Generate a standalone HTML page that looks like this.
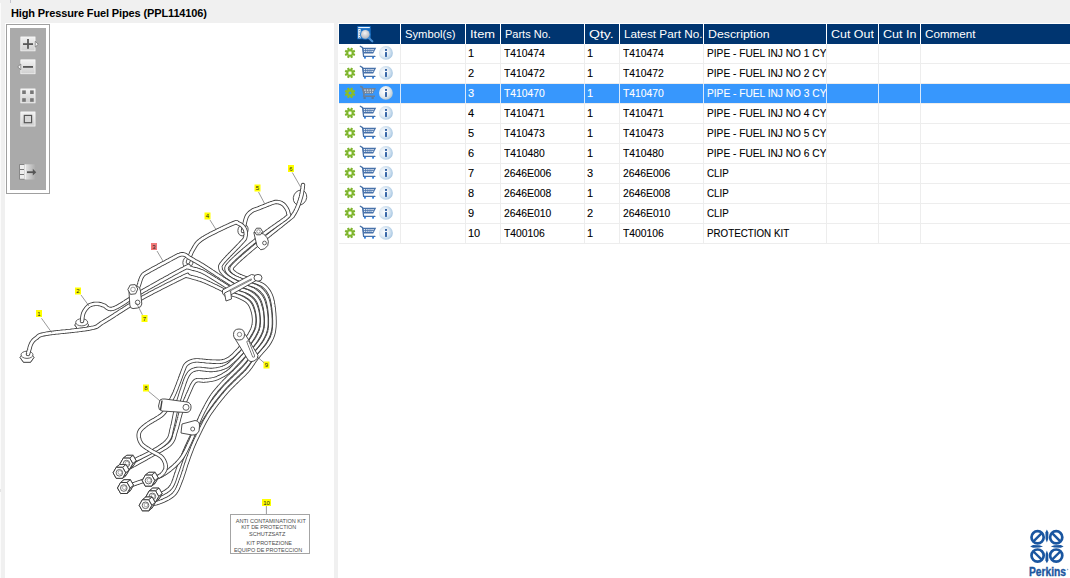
<!DOCTYPE html>
<html><head><meta charset="utf-8">
<style>
*{margin:0;padding:0;box-sizing:border-box}
html,body{width:1070px;height:578px;overflow:hidden;background:#f0f0f0;font-family:"Liberation Sans",sans-serif;font-size:11px;color:#000}
.a{position:absolute}
#title{left:11px;top:6px;font-weight:bold;font-size:11px;line-height:14px;letter-spacing:-0.13px;white-space:nowrap}
#lp{left:5px;top:23px;width:329px;height:555px;background:#fff}
#rp{left:338px;top:23px;width:732px;height:555px;background:#fff}
#tb{left:6px;top:24px;width:44px;height:170px;border:1px solid #a0a0a0;background:#fff}
#tbi{left:10px;top:28px;width:36px;height:162px;background:#aaaaaa}
.btn{position:absolute;left:20px;width:15px;height:15px;border-radius:2px;background:linear-gradient(#f8f8f8,#d4d4d4);box-shadow:0 1px 1px rgba(0,0,0,.35)}
#hdr{left:339px;top:24px;width:731px;height:20px;background:#003570}
.hs{position:absolute;top:0;width:1px;height:20px;background:#fff}
.ht{position:absolute;top:3px;color:#fff;line-height:14px;white-space:nowrap}
.vs{position:absolute;width:1px;background:#ededed}
.hl{position:absolute;left:339px;width:731px;height:1px;background:#ededed}
.sel{position:absolute;left:339px;width:731px;height:19px;background:#3797fd}
.c{position:absolute;line-height:14px;white-space:nowrap;overflow:hidden;-webkit-text-stroke:0.1px currentColor}
</style></head><body>
<svg width="0" height="0" style="position:absolute">
<defs>
<radialGradient id="ig" cx="0.4" cy="0.45" r="0.62"><stop offset="0" stop-color="#fbfdff"/><stop offset="0.5" stop-color="#e4edf5"/><stop offset="0.85" stop-color="#b8d2e8"/><stop offset="1" stop-color="#9dc0df"/></radialGradient>
<radialGradient id="igs" cx="0.4" cy="0.4" r="0.65"><stop offset="0" stop-color="#ffffff"/><stop offset="0.6" stop-color="#e2e9ee"/><stop offset="1" stop-color="#b3c5cf"/></radialGradient>
<radialGradient id="lens" cx="0.45" cy="0.35" r="0.65"><stop offset="0" stop-color="#f4f4f4"/><stop offset="1" stop-color="#b0b4bc"/></radialGradient>
<g id="gear"><path fill="#7db32c" d="M9.68,8.24 L11.31,8.88 L10.45,10.96 L8.85,10.26 L8.36,10.75 L9.06,12.35 L6.98,13.21 L6.34,11.58 L5.66,11.58 L5.02,13.21 L2.94,12.35 L3.64,10.75 L3.15,10.26 L1.55,10.96 L0.69,8.88 L2.32,8.24 L2.32,7.56 L0.69,6.92 L1.55,4.84 L3.15,5.54 L3.64,5.05 L2.94,3.45 L5.02,2.59 L5.66,4.22 L6.34,4.22 L6.98,2.59 L9.06,3.45 L8.36,5.05 L8.85,5.54 L10.45,4.84 L11.31,6.92 L9.68,7.56Z"/><circle cx="6" cy="7.9" r="2.2" fill="#a8d860"/><circle cx="6" cy="7.9" r="1.5" fill="#fff"/></g>
<g id="cart">
<path d="M16.3,1.3 L18.6,2.6 L19.6,11.4 L30.9,11.4" fill="none" stroke="#4670a8" stroke-width="1.3" stroke-linejoin="round" stroke-linecap="round"/>
<path d="M18.4,2.7 L32.2,2.7 L29.2,8.6 L19.3,8.6Z" fill="#4872aa"/>
<path d="M19.8,4.1h1.4v1.2h-1.4zM22.2,4.1h1.3v1.2h-1.3zM24.3,4.1h1.3v1.2h-1.3zM26.4,4.1h1.3v1.2h-1.3zM28.3,4.1h1.4v1.2h-1.4zM20.1,5.9h1.2v1.2h-1.2zM22.2,5.9h1.2v1.2h-1.2zM24.3,5.9h1.2v1.2h-1.2zM26.4,5.9h1.2v1.2h-1.2zM28.1,5.9h1.1v1.2h-1.1z" fill="#e8eef6"/>
<rect x="20" y="12" width="1.9" height="1.6" fill="#2f80e0"/><rect x="28.1" y="12" width="1.9" height="1.6" fill="#2f80e0"/>
</g>
<g id="info"><circle cx="41.9" cy="7.9" r="6.9" fill="url(#ig)"/><rect x="41" y="4" width="2" height="1.9" fill="#3a68a8"/><rect x="41" y="7.1" width="2" height="4.8" fill="#3a68a8"/></g>
<g id="ic"><use href="#gear"/><use href="#cart"/><use href="#info"/></g>
<g id="ics"><path fill="#8cbf22" d="M9.68,8.24 L11.31,8.88 L10.45,10.96 L8.85,10.26 L8.36,10.75 L9.06,12.35 L6.98,13.21 L6.34,11.58 L5.66,11.58 L5.02,13.21 L2.94,12.35 L3.64,10.75 L3.15,10.26 L1.55,10.96 L0.69,8.88 L2.32,8.24 L2.32,7.56 L0.69,6.92 L1.55,4.84 L3.15,5.54 L3.64,5.05 L2.94,3.45 L5.02,2.59 L5.66,4.22 L6.34,4.22 L6.98,2.59 L9.06,3.45 L8.36,5.05 L8.85,5.54 L10.45,4.84 L11.31,6.92 L9.68,7.56Z"/><circle cx="6" cy="7.9" r="1.5" fill="#3797fd"/>
<path d="M16.2,1.2 L18.3,2.2 L20,9.6 L19.6,11.3 L31,11.3" fill="none" stroke="#6d7f94" stroke-width="1.5" stroke-linejoin="round"/>
<path d="M18.2,3 L32,3 L28.8,8.8 L19.8,8.8Z" fill="#71839a"/>
<path d="M20.3,4.6h1.4v1.1h-1.4zM22.9,4.6h1.4v1.1h-1.4zM25.5,4.6h1.4v1.1h-1.4zM28.1,4.6h1.4v1.1h-1.4zM21,6.8h1.2v0.9h-1.2zM23.4,6.8h1.2v0.9h-1.2zM25.8,6.8h1.2v0.9h-1.2zM28.0,6.8h1.0v0.9h-1.0z" fill="#e4eaf0"/>
<rect x="19.5" y="12.2" width="2.2" height="1.6" fill="#5c7590"/><rect x="27.5" y="12.2" width="2.2" height="1.6" fill="#5c7590"/>
<circle cx="41.9" cy="7.9" r="6.9" fill="url(#igs)"/><rect x="41" y="4" width="2" height="1.9" fill="#3a68a8"/><rect x="41" y="7.1" width="2" height="4.8" fill="#3a68a8"/></g>
<g id="hicon">
<rect x="5.2" y="2.1" width="13.5" height="13.1" fill="#1b6fc2"/>
<rect x="6.2" y="3" width="11.6" height="1.1" fill="#eef5fc"/>
<rect x="6.2" y="4.9" width="2.4" height="9.4" fill="#f4f8fc"/>
<rect x="6.9" y="6.3" width="1" height="0.8" fill="#4a6a90"/><rect x="6.9" y="8.6" width="1" height="0.8" fill="#4a6a90"/><rect x="6.9" y="10.9" width="1" height="0.8" fill="#4a6a90"/><rect x="6.9" y="13" width="1" height="0.8" fill="#4a6a90"/>
<circle cx="13.3" cy="10.4" r="5.2" fill="#2a7fd0"/>
<circle cx="13.3" cy="10.4" r="4.3" fill="url(#lens)"/>
<path d="M16.8,14 L20.6,17.6" stroke="#4c90d4" stroke-width="2.2" stroke-linecap="round" stroke-dasharray="1.2 0.6"/>
</g>
</defs></svg>
<div class="a" style="left:10px;top:0;width:1px;height:3px;background:#c4c4cc"></div>
<div class="a" style="left:0;top:3px;width:1px;height:575px;background:#fbfbfb"></div>
<div class="a" style="left:0;top:489px;width:1px;height:3px;background:#e4e4e4"></div>
<div id="title" class="a">High Pressure Fuel Pipes (PPL114106)</div>
<div id="lp" class="a"></div>
<div id="rp" class="a"></div>

<!-- toolbar -->
<div id="tb" class="a"></div>
<div id="tbi" class="a"></div>
<svg class="a" style="left:10px;top:28px" width="36" height="162" viewBox="10 28 36 162">
<defs><linearGradient id="bg1" x1="0" y1="0" x2="0" y2="1"><stop offset="0" stop-color="#f2f2f2"/><stop offset="1" stop-color="#cfcfcf"/></linearGradient>
<linearGradient id="bg2" x1="0" y1="0" x2="1" y2="0"><stop offset="0" stop-color="#e8e8e8"/><stop offset="1" stop-color="#aaaaaa"/></linearGradient></defs>
<rect x="10" y="28" width="36" height="162" fill="#aaaaaa"/>
<!-- plus -->
<rect x="20.2" y="36.4" width="15.4" height="15" fill="#8a8a8a" opacity="0.7"/>
<rect x="20.8" y="36.9" width="14.3" height="14" fill="url(#bg1)" stroke="#fafafa" stroke-width="0.8"/><rect x="20.3" y="36.4" width="0" height="0"/>
<rect x="23" y="43.2" width="10" height="1.8" fill="#585858"/><rect x="27.1" y="39" width="1.8" height="9.8" fill="#585858"/>
<path d="M35.2,41.3 L38.3,44.2 L35.2,47.1Z" fill="#f2f2f2" stroke="#6e6e6e" stroke-width="0.7" stroke-linejoin="round"/>
<!-- minus -->
<rect x="20.2" y="59.3" width="15.4" height="15" fill="#8a8a8a" opacity="0.7"/>
<rect x="20.8" y="59.8" width="14.3" height="14" fill="url(#bg1)" stroke="#fafafa" stroke-width="0.8"/><rect x="20.3" y="36.4" width="0" height="0"/>
<rect x="23" y="66" width="10" height="1.8" fill="#585858"/>
<path d="M20.8,64 L17.7,66.9 L20.8,69.8Z" fill="#f2f2f2" stroke="#6e6e6e" stroke-width="0.7" stroke-linejoin="round"/>
<!-- grid -->
<rect x="20.2" y="88.4" width="15.4" height="15" fill="#8a8a8a" opacity="0.7"/>
<rect x="20.8" y="88.9" width="14.3" height="14" fill="url(#bg1)" stroke="#fafafa" stroke-width="0.8"/><rect x="20.3" y="36.4" width="0" height="0"/>
<rect x="22.2" y="90.4" width="3.6" height="3.6" fill="#777"/><rect x="30.1" y="90.4" width="3.6" height="3.6" fill="#777"/>
<rect x="22.2" y="98.2" width="3.6" height="3.6" fill="#777"/><rect x="30.1" y="98.2" width="3.6" height="3.6" fill="#777"/>
<!-- square -->
<rect x="20.2" y="111.4" width="15.4" height="15.2" fill="#8a8a8a" opacity="0.7"/>
<rect x="20.8" y="111.9" width="14.3" height="14.2" fill="url(#bg1)" stroke="#fafafa" stroke-width="0.8"/><rect x="20.3" y="36.4" width="0" height="0"/>
<rect x="24.3" y="115.4" width="7.3" height="7.3" fill="#d8d8d8" stroke="#555" stroke-width="1.2"/>
<!-- export -->
<rect x="19.3" y="164.2" width="5.4" height="15.3" fill="#7a7a7a"/>
<rect x="20" y="165" width="4" height="4" fill="#eee"/><rect x="20" y="170" width="4" height="4" fill="#eee"/><rect x="20" y="175" width="4" height="3.8" fill="#eee"/>
<rect x="24.6" y="164.3" width="11" height="15.2" fill="url(#bg2)"/>
<path d="M25,164.6 V179" stroke="#fff" stroke-width="1"/>
<rect x="27" y="171.3" width="6.5" height="1.8" fill="#555"/><path d="M32.8,168.8 L36.2,172.2 L32.8,175.6Z" fill="#555"/>
</svg>

<!-- DRAWING -->
<svg class="a" style="left:0;top:0" width="334" height="578" viewBox="0 0 334 578">
<path d="M34.0,357.5 L30.5,362.3 L23.5,362.3 L20.0,357.5 L23.5,352.7 L30.5,352.7Z" fill="#fff" stroke="#3c3c3c" stroke-width="0.9" stroke-linejoin="round"/>
<ellipse cx="27" cy="354.8" rx="6" ry="3.6" fill="#fff" stroke="#3c3c3c" stroke-width="0.8"/>
<path d="M20,357.5 L23.5,362.5 L30.5,362.5 L34,357.5" fill="none" stroke="#555" stroke-width="0.6"/>
<path d="M88.7,325.0 L85.2,329.8 L78.2,329.8 L74.7,325.0 L78.2,320.2 L85.2,320.2Z" fill="#fff" stroke="#3c3c3c" stroke-width="0.9" stroke-linejoin="round"/>
<ellipse cx="81.7" cy="322.3" rx="6" ry="3.6" fill="#fff" stroke="#3c3c3c" stroke-width="0.8"/>
<path d="M74.7,325.0 L78.2,330.0 L85.2,330.0 L88.7,325.0" fill="none" stroke="#555" stroke-width="0.6"/>
<ellipse cx="188" cy="262" rx="5" ry="6" transform="rotate(20 188 262)" fill="#fff" stroke="#3c3c3c" stroke-width="0.8"/>
<ellipse cx="243" cy="230" rx="5" ry="6" transform="rotate(20 243 230)" fill="#fff" stroke="#3c3c3c" stroke-width="0.8"/>
<ellipse cx="300" cy="197.6" rx="6.5" ry="7.7" transform="rotate(25 300 197.6)" fill="#fff" stroke="#3c3c3c" stroke-width="0.8"/>
<path d="M303.0,185.0 L302.9,185.6 L302.8,186.4 L302.7,187.3 L302.6,188.4 L302.4,189.5 L302.2,190.7 L302.0,192.0 L301.8,193.2 L301.6,194.4 L301.3,195.6 L301.1,196.5 L300.8,197.5 L300.5,198.4 L300.2,199.4 L299.9,200.5 L299.5,201.5 L299.2,202.5 L298.8,203.5 L298.5,204.5 L298.1,205.4 L297.8,206.4 L297.4,207.2 L297.1,208.0 L296.6,209.2 L296.0,210.3 L295.5,211.3 L295.0,212.2 L294.5,213.1 L294.0,213.9 L293.5,214.6 L293.0,215.3 L292.6,216.0 L292.7,216.1 L292.1,216.6 L289.9,218.4 L289.4,218.8 L288.9,219.2 L288.3,219.7 L287.7,220.2 L287.0,220.7 L286.3,221.3 L285.6,221.9 L284.8,222.5 L284.0,223.1 L283.2,223.8 L282.3,224.5 L281.5,225.2 L280.6,225.9 L279.7,226.6 L278.8,227.3 L277.8,228.1 L276.9,228.8 L276.0,229.5 L275.1,230.3 L274.2,231.0 L273.2,231.7 L272.3,232.4 L271.5,233.1 L270.6,233.8 L269.8,234.5 L269.0,235.1 L268.2,235.8 L267.4,236.4 L266.7,236.9 L266.0,237.5 L265.0,238.3 L264.1,239.0 L263.2,239.8 L262.3,240.5 L261.4,241.2 L260.6,241.9 L259.7,242.5 L258.9,243.2 L258.2,243.8 L257.4,244.4 L256.6,245.0 L255.9,245.6 L255.1,246.2 L254.4,246.8 L253.7,247.4 L252.9,248.0 L252.2,248.6 L251.5,249.2 L250.7,249.9 L250.0,250.5 L249.2,251.2 L248.3,251.9 L247.4,252.7 L246.6,253.4 L245.7,254.2 L244.8,254.9 L244.0,255.7 L243.1,256.4 L242.3,257.2 L241.5,257.9 L240.7,258.6 L239.9,259.3 L239.1,260.0 L238.4,260.7 L237.8,261.3 L237.1,261.9 L236.5,262.5 L236.0,263.0 L234.8,264.2 L233.8,265.2 L232.9,266.1 L232.3,266.8 L231.9,267.5 L231.6,268.3 L231.5,269.0 L231.7,269.9 L232.2,270.8 L232.9,271.6 L233.8,272.4 L234.9,273.2 L236.0,274.0 L236.8,274.5 L237.7,275.0 L238.7,275.4 L239.7,275.9 L240.8,276.3 L241.9,276.8 L243.0,277.2 L244.0,277.6 L245.0,278.0 L246.0,278.4 L247.0,278.8 L247.9,279.1 L248.9,279.4 L249.8,279.8 L250.8,280.1 L251.9,280.5 L253.0,281.0 L253.8,281.3 L254.7,281.7 L255.6,282.0 L256.6,282.3 L257.6,282.7 L258.6,283.1 L259.5,283.5 L260.5,283.9 L261.5,284.4 L262.4,284.9 L263.2,285.4 L264.0,286.0 L264.7,286.6 L265.4,287.3 L266.1,288.0 L266.8,288.7 L267.4,289.5 L268.0,290.3 L268.6,291.2 L269.1,292.0 L269.6,293.0 L270.1,293.9 L270.6,294.9 L271.0,296.0 L271.3,296.8 L271.6,297.7 L271.9,298.6 L272.1,299.5 L272.3,300.5 L272.5,301.5 L272.8,302.5 L272.9,303.5 L273.1,304.5 L273.3,305.6 L273.4,306.7 L273.6,307.7 L273.7,308.8 L273.8,309.9 L273.9,310.9 L274.0,312.0 L274.1,313.0 L274.2,313.9 L274.2,314.9 L274.3,316.0 L274.4,317.0 L274.4,318.0 L274.4,319.1 L274.5,320.1 L274.5,321.2 L274.5,322.2 L274.5,323.3 L274.5,324.3 L274.4,325.3 L274.4,326.3 L274.3,327.3 L274.2,328.2 L274.1,329.1 L274.0,330.0 L273.8,331.2 L273.6,332.3 L273.3,333.3 L273.1,334.3 L272.8,335.3 L272.4,336.2 L272.1,337.2 L271.7,338.1 L271.2,339.1 L270.7,340.0 L270.2,341.0 L269.6,342.0 L269.0,343.0 L268.5,343.8 L268.0,344.6 L267.4,345.4 L266.7,346.2 L266.1,347.0 L265.4,347.8 L264.7,348.6 L264.0,349.5 L263.2,350.3 L262.5,351.1 L261.8,351.9 L261.0,352.8 L260.3,353.6 L259.6,354.4 L258.9,355.2 L258.2,356.0 L257.6,356.7 L257.0,357.5 L256.3,358.4 L255.7,359.3 L255.0,360.2 L254.4,361.0 L253.8,361.9 L253.2,362.8 L252.7,363.6 L252.1,364.4 L251.5,365.3 L251.0,366.1 L250.4,366.9 L249.8,367.7 L249.2,368.5 L248.6,369.2 L248.0,370.0 L247.3,370.8 L246.6,371.6 L245.9,372.3 L245.2,373.0 L244.5,373.8 L243.8,374.5 L243.1,375.2 L242.3,375.8 L241.6,376.5 L240.9,377.2 L240.2,377.9 L239.4,378.6 L238.7,379.3 L238.0,380.0 L237.3,380.7 L236.6,381.4 L235.9,382.1 L235.1,382.8 L234.4,383.5 L233.7,384.2 L233.0,384.9 L232.3,385.6 L231.6,386.3 L230.9,387.0 L230.1,387.7 L229.4,388.5 L228.7,389.2 L228.0,390.0 L227.3,390.7 L226.7,391.5 L226.0,392.2 L225.3,393.0 L224.7,393.8 L224.0,394.6 L223.3,395.4 L222.7,396.2 L222.0,397.0 L221.3,397.8 L220.7,398.6 L220.0,399.4 L219.3,400.3 L218.7,401.1 L218.0,402.0 L217.4,402.8 L216.8,403.5 L216.2,404.3 L215.6,405.1 L215.0,405.9 L214.4,406.8 L213.8,407.6 L213.2,408.4 L212.6,409.2 L212.0,410.1 L211.4,410.9 L210.8,411.7 L210.2,412.6 L209.6,413.4 L209.1,414.3 L208.5,415.1 L208.0,416.0 L207.5,416.9 L207.0,417.7 L206.5,418.6 L206.0,419.5 L205.5,420.3 L205.0,421.2 L204.5,422.1 L204.0,423.0 L203.6,423.9 L203.1,424.8 L202.7,425.7 L202.2,426.6 L201.8,427.4 L201.3,428.3 L200.9,429.2 L200.4,430.1 L200.0,431.0 L199.5,431.9 L199.1,432.9 L198.6,433.8 L198.2,434.7 L197.7,435.7 L197.3,436.6 L196.8,437.5 L196.4,438.4 L195.9,439.4 L195.5,440.3 L195.1,441.2 L194.7,442.2 L194.2,443.1 L193.8,444.1 L193.4,445.0 L193.0,446.0 L192.6,446.9 L192.2,447.8 L191.9,448.7 L191.5,449.7 L191.2,450.6 L190.8,451.5 L190.5,452.4 L190.1,453.3 L189.8,454.3 L189.4,455.2 L189.1,456.2 L188.7,457.1 L188.4,458.1 L188.0,459.0 L187.7,460.0 L187.4,461.0 L187.0,462.0 L186.7,463.0 L186.3,463.9 L186.0,464.9 L185.7,465.9 L185.4,467.0 L185.0,468.0 L184.7,469.0 L184.4,470.1 L184.1,471.1 L183.7,472.2 L183.4,473.2 L183.1,474.2 L182.7,475.2 L182.4,476.2 L182.1,477.2 L181.7,478.2 L181.4,479.1 L181.0,480.0 L180.6,481.1 L180.2,482.1 L179.8,483.2 L179.4,484.2 L179.0,485.2 L178.6,486.2 L178.2,487.1 L177.8,488.1 L177.4,489.0 L176.9,489.9 L176.4,490.8 L175.9,491.6 L175.3,492.5 L174.7,493.2 L174.0,494.0 L173.3,494.7 L172.6,495.3 L171.8,495.9 L171.0,496.5 L170.2,497.1 L169.3,497.6 L168.4,498.2 L167.5,498.7 L166.5,499.1 L165.6,499.6 L164.6,500.0 L163.7,500.5 L162.8,500.9 L161.8,501.3 L160.9,501.6 L160.0,502.0 L158.9,502.4 L157.8,502.7 L156.7,503.1 L155.5,503.4 L154.3,503.7 L153.1,503.9 L151.9,504.1 L150.7,504.4 L149.6,504.6 L148.6,504.7 L147.7,504.9 L146.8,505.0 L146.1,505.2 L145.5,505.3" stroke="#3c3c3c" stroke-width="4.4" fill="none" stroke-linejoin="round" stroke-linecap="round"/>
<path d="M303.0,185.0 L302.9,185.6 L302.8,186.4 L302.7,187.3 L302.6,188.4 L302.4,189.5 L302.2,190.7 L302.0,192.0 L301.8,193.2 L301.6,194.4 L301.3,195.6 L301.1,196.5 L300.8,197.5 L300.5,198.4 L300.2,199.4 L299.9,200.5 L299.5,201.5 L299.2,202.5 L298.8,203.5 L298.5,204.5 L298.1,205.4 L297.8,206.4 L297.4,207.2 L297.1,208.0 L296.6,209.2 L296.0,210.3 L295.5,211.3 L295.0,212.2 L294.5,213.1 L294.0,213.9 L293.5,214.6 L293.0,215.3 L292.6,216.0 L292.7,216.1 L292.1,216.6 L289.9,218.4 L289.4,218.8 L288.9,219.2 L288.3,219.7 L287.7,220.2 L287.0,220.7 L286.3,221.3 L285.6,221.9 L284.8,222.5 L284.0,223.1 L283.2,223.8 L282.3,224.5 L281.5,225.2 L280.6,225.9 L279.7,226.6 L278.8,227.3 L277.8,228.1 L276.9,228.8 L276.0,229.5 L275.1,230.3 L274.2,231.0 L273.2,231.7 L272.3,232.4 L271.5,233.1 L270.6,233.8 L269.8,234.5 L269.0,235.1 L268.2,235.8 L267.4,236.4 L266.7,236.9 L266.0,237.5 L265.0,238.3 L264.1,239.0 L263.2,239.8 L262.3,240.5 L261.4,241.2 L260.6,241.9 L259.7,242.5 L258.9,243.2 L258.2,243.8 L257.4,244.4 L256.6,245.0 L255.9,245.6 L255.1,246.2 L254.4,246.8 L253.7,247.4 L252.9,248.0 L252.2,248.6 L251.5,249.2 L250.7,249.9 L250.0,250.5 L249.2,251.2 L248.3,251.9 L247.4,252.7 L246.6,253.4 L245.7,254.2 L244.8,254.9 L244.0,255.7 L243.1,256.4 L242.3,257.2 L241.5,257.9 L240.7,258.6 L239.9,259.3 L239.1,260.0 L238.4,260.7 L237.8,261.3 L237.1,261.9 L236.5,262.5 L236.0,263.0 L234.8,264.2 L233.8,265.2 L232.9,266.1 L232.3,266.8 L231.9,267.5 L231.6,268.3 L231.5,269.0 L231.7,269.9 L232.2,270.8 L232.9,271.6 L233.8,272.4 L234.9,273.2 L236.0,274.0 L236.8,274.5 L237.7,275.0 L238.7,275.4 L239.7,275.9 L240.8,276.3 L241.9,276.8 L243.0,277.2 L244.0,277.6 L245.0,278.0 L246.0,278.4 L247.0,278.8 L247.9,279.1 L248.9,279.4 L249.8,279.8 L250.8,280.1 L251.9,280.5 L253.0,281.0 L253.8,281.3 L254.7,281.7 L255.6,282.0 L256.6,282.3 L257.6,282.7 L258.6,283.1 L259.5,283.5 L260.5,283.9 L261.5,284.4 L262.4,284.9 L263.2,285.4 L264.0,286.0 L264.7,286.6 L265.4,287.3 L266.1,288.0 L266.8,288.7 L267.4,289.5 L268.0,290.3 L268.6,291.2 L269.1,292.0 L269.6,293.0 L270.1,293.9 L270.6,294.9 L271.0,296.0 L271.3,296.8 L271.6,297.7 L271.9,298.6 L272.1,299.5 L272.3,300.5 L272.5,301.5 L272.8,302.5 L272.9,303.5 L273.1,304.5 L273.3,305.6 L273.4,306.7 L273.6,307.7 L273.7,308.8 L273.8,309.9 L273.9,310.9 L274.0,312.0 L274.1,313.0 L274.2,313.9 L274.2,314.9 L274.3,316.0 L274.4,317.0 L274.4,318.0 L274.4,319.1 L274.5,320.1 L274.5,321.2 L274.5,322.2 L274.5,323.3 L274.5,324.3 L274.4,325.3 L274.4,326.3 L274.3,327.3 L274.2,328.2 L274.1,329.1 L274.0,330.0 L273.8,331.2 L273.6,332.3 L273.3,333.3 L273.1,334.3 L272.8,335.3 L272.4,336.2 L272.1,337.2 L271.7,338.1 L271.2,339.1 L270.7,340.0 L270.2,341.0 L269.6,342.0 L269.0,343.0 L268.5,343.8 L268.0,344.6 L267.4,345.4 L266.7,346.2 L266.1,347.0 L265.4,347.8 L264.7,348.6 L264.0,349.5 L263.2,350.3 L262.5,351.1 L261.8,351.9 L261.0,352.8 L260.3,353.6 L259.6,354.4 L258.9,355.2 L258.2,356.0 L257.6,356.7 L257.0,357.5 L256.3,358.4 L255.7,359.3 L255.0,360.2 L254.4,361.0 L253.8,361.9 L253.2,362.8 L252.7,363.6 L252.1,364.4 L251.5,365.3 L251.0,366.1 L250.4,366.9 L249.8,367.7 L249.2,368.5 L248.6,369.2 L248.0,370.0 L247.3,370.8 L246.6,371.6 L245.9,372.3 L245.2,373.0 L244.5,373.8 L243.8,374.5 L243.1,375.2 L242.3,375.8 L241.6,376.5 L240.9,377.2 L240.2,377.9 L239.4,378.6 L238.7,379.3 L238.0,380.0 L237.3,380.7 L236.6,381.4 L235.9,382.1 L235.1,382.8 L234.4,383.5 L233.7,384.2 L233.0,384.9 L232.3,385.6 L231.6,386.3 L230.9,387.0 L230.1,387.7 L229.4,388.5 L228.7,389.2 L228.0,390.0 L227.3,390.7 L226.7,391.5 L226.0,392.2 L225.3,393.0 L224.7,393.8 L224.0,394.6 L223.3,395.4 L222.7,396.2 L222.0,397.0 L221.3,397.8 L220.7,398.6 L220.0,399.4 L219.3,400.3 L218.7,401.1 L218.0,402.0 L217.4,402.8 L216.8,403.5 L216.2,404.3 L215.6,405.1 L215.0,405.9 L214.4,406.8 L213.8,407.6 L213.2,408.4 L212.6,409.2 L212.0,410.1 L211.4,410.9 L210.8,411.7 L210.2,412.6 L209.6,413.4 L209.1,414.3 L208.5,415.1 L208.0,416.0 L207.5,416.9 L207.0,417.7 L206.5,418.6 L206.0,419.5 L205.5,420.3 L205.0,421.2 L204.5,422.1 L204.0,423.0 L203.6,423.9 L203.1,424.8 L202.7,425.7 L202.2,426.6 L201.8,427.4 L201.3,428.3 L200.9,429.2 L200.4,430.1 L200.0,431.0 L199.5,431.9 L199.1,432.9 L198.6,433.8 L198.2,434.7 L197.7,435.7 L197.3,436.6 L196.8,437.5 L196.4,438.4 L195.9,439.4 L195.5,440.3 L195.1,441.2 L194.7,442.2 L194.2,443.1 L193.8,444.1 L193.4,445.0 L193.0,446.0 L192.6,446.9 L192.2,447.8 L191.9,448.7 L191.5,449.7 L191.2,450.6 L190.8,451.5 L190.5,452.4 L190.1,453.3 L189.8,454.3 L189.4,455.2 L189.1,456.2 L188.7,457.1 L188.4,458.1 L188.0,459.0 L187.7,460.0 L187.4,461.0 L187.0,462.0 L186.7,463.0 L186.3,463.9 L186.0,464.9 L185.7,465.9 L185.4,467.0 L185.0,468.0 L184.7,469.0 L184.4,470.1 L184.1,471.1 L183.7,472.2 L183.4,473.2 L183.1,474.2 L182.7,475.2 L182.4,476.2 L182.1,477.2 L181.7,478.2 L181.4,479.1 L181.0,480.0 L180.6,481.1 L180.2,482.1 L179.8,483.2 L179.4,484.2 L179.0,485.2 L178.6,486.2 L178.2,487.1 L177.8,488.1 L177.4,489.0 L176.9,489.9 L176.4,490.8 L175.9,491.6 L175.3,492.5 L174.7,493.2 L174.0,494.0 L173.3,494.7 L172.6,495.3 L171.8,495.9 L171.0,496.5 L170.2,497.1 L169.3,497.6 L168.4,498.2 L167.5,498.7 L166.5,499.1 L165.6,499.6 L164.6,500.0 L163.7,500.5 L162.8,500.9 L161.8,501.3 L160.9,501.6 L160.0,502.0 L158.9,502.4 L157.8,502.7 L156.7,503.1 L155.5,503.4 L154.3,503.7 L153.1,503.9 L151.9,504.1 L150.7,504.4 L149.6,504.6 L148.6,504.7 L147.7,504.9 L146.8,505.0 L146.1,505.2 L145.5,505.3" stroke="#fff" stroke-width="2.7" fill="none" stroke-linejoin="round" stroke-linecap="round"/>
<path d="M243.0,231.0 L243.1,230.4 L243.3,229.7 L243.5,228.8 L243.7,227.8 L243.9,226.7 L244.2,225.6 L244.4,224.4 L244.7,223.2 L245.0,222.0 L245.3,220.8 L245.6,219.7 L245.9,218.7 L246.2,217.8 L246.5,217.0 L247.1,215.8 L247.7,214.9 L248.4,214.0 L249.1,213.3 L249.8,212.6 L250.5,212.1 L251.3,211.5 L252.0,211.0 L252.9,210.4 L253.7,210.0 L254.5,209.7 L255.4,209.4 L256.5,209.0 L258.0,208.5 L258.7,208.2 L259.5,207.9 L260.4,207.5 L261.4,207.1 L262.4,206.7 L263.5,206.3 L264.5,205.9 L265.6,205.4 L266.7,205.0 L267.7,204.6 L268.7,204.2 L269.6,203.9 L270.5,203.5 L271.3,203.2 L272.0,203.0 L273.6,202.5 L274.6,202.2 L275.4,202.0 L276.1,202.0 L277.0,202.0 L278.0,202.1 L279.0,202.3 L280.1,202.6 L281.1,203.0 L282.0,203.5 L282.9,204.1 L283.8,204.8 L284.6,205.7 L285.3,206.6 L286.0,207.5 L286.5,208.4 L287.0,209.3 L287.5,210.3 L287.9,211.3 L288.2,212.3 L288.3,213.2 L288.6,214.1 L289.0,214.7 L288.6,215.6 L286.8,217.4 L286.3,217.8 L285.8,218.2 L285.2,218.7 L284.6,219.2 L283.9,219.7 L283.2,220.2 L282.4,220.7 L281.6,221.3 L280.8,221.9 L279.9,222.5 L279.0,223.1 L278.1,223.7 L277.2,224.4 L276.3,225.0 L275.3,225.7 L274.4,226.4 L273.4,227.0 L272.5,227.7 L271.5,228.4 L270.5,229.1 L269.6,229.7 L268.7,230.4 L267.8,231.1 L266.9,231.7 L266.0,232.4 L265.2,233.0 L264.4,233.6 L263.7,234.2 L262.9,234.8 L262.0,235.4 L261.2,236.1 L260.4,236.7 L259.6,237.4 L258.7,238.0 L257.9,238.7 L257.1,239.3 L256.2,240.0 L255.4,240.7 L254.6,241.3 L253.8,242.0 L252.9,242.6 L252.1,243.3 L251.3,243.9 L250.5,244.6 L249.7,245.2 L249.0,245.9 L248.2,246.5 L247.5,247.1 L246.7,247.7 L246.0,248.3 L245.3,248.9 L244.7,249.4 L244.0,250.0 L243.1,250.8 L242.1,251.6 L241.2,252.4 L240.3,253.2 L239.5,253.9 L238.6,254.7 L237.8,255.4 L237.0,256.2 L236.2,256.9 L235.5,257.6 L234.7,258.3 L234.0,258.9 L233.4,259.6 L232.7,260.2 L232.1,260.8 L231.5,261.4 L231.0,261.9 L230.5,262.5 L230.0,263.0 L228.7,264.4 L227.8,265.5 L227.1,266.4 L226.7,267.3 L226.5,268.1 L226.5,269.0 L226.7,269.9 L227.1,270.8 L227.6,271.7 L228.3,272.5 L229.2,273.4 L230.1,274.2 L231.0,275.0 L231.7,275.5 L232.5,276.0 L233.4,276.5 L234.3,276.9 L235.3,277.4 L236.2,277.8 L237.2,278.2 L238.2,278.7 L239.1,279.1 L240.0,279.5 L240.9,280.0 L241.8,280.4 L242.7,280.8 L243.5,281.2 L244.4,281.6 L245.3,282.1 L246.2,282.5 L247.2,282.9 L248.2,283.4 L249.0,283.8 L249.9,284.1 L250.8,284.4 L251.8,284.8 L252.8,285.1 L253.7,285.5 L254.7,285.8 L255.7,286.2 L256.6,286.7 L257.5,287.1 L258.4,287.6 L259.2,288.2 L260.0,288.8 L260.8,289.5 L261.6,290.2 L262.3,291.0 L263.0,291.8 L263.7,292.6 L264.4,293.4 L265.0,294.4 L265.6,295.3 L266.1,296.3 L266.6,297.4 L266.9,298.2 L267.3,299.1 L267.6,300.0 L267.9,300.9 L268.1,301.9 L268.4,302.9 L268.6,303.9 L268.8,304.9 L269.0,306.0 L269.2,307.1 L269.4,308.1 L269.5,309.2 L269.7,310.3 L269.8,311.3 L269.9,312.4 L270.0,313.4 L270.1,314.4 L270.2,315.5 L270.2,316.6 L270.3,317.7 L270.4,318.8 L270.4,319.9 L270.4,321.0 L270.4,322.1 L270.4,323.1 L270.4,324.2 L270.3,325.3 L270.3,326.3 L270.2,327.3 L270.0,328.3 L269.9,329.2 L269.7,330.3 L269.5,331.3 L269.2,332.4 L268.9,333.3 L268.6,334.3 L268.3,335.2 L267.9,336.1 L267.5,337.0 L267.0,337.9 L266.6,338.8 L266.0,339.8 L265.5,340.7 L264.9,341.7 L264.4,342.5 L263.9,343.3 L263.3,344.1 L262.7,344.9 L262.0,345.7 L261.4,346.5 L260.7,347.3 L260.0,348.1 L259.3,349.0 L258.6,349.8 L257.9,350.6 L257.2,351.4 L256.5,352.2 L255.8,353.0 L255.1,353.8 L254.5,354.5 L253.9,355.3 L253.2,356.2 L252.5,357.1 L251.9,358.0 L251.2,358.8 L250.6,359.7 L250.0,360.5 L249.4,361.4 L248.8,362.2 L248.2,363.0 L247.6,363.8 L246.9,364.6 L246.3,365.4 L245.7,366.2 L245.0,367.0 L244.3,367.8 L243.6,368.5 L242.9,369.3 L242.2,370.0 L241.5,370.7 L240.8,371.4 L240.1,372.1 L239.3,372.8 L238.6,373.5 L237.9,374.2 L237.2,374.9 L236.4,375.6 L235.7,376.3 L235.0,377.0 L234.3,377.7 L233.6,378.4 L232.9,379.1 L232.1,379.8 L231.4,380.5 L230.7,381.2 L230.0,381.9 L229.3,382.6 L228.6,383.3 L227.9,384.0 L227.1,384.7 L226.4,385.5 L225.7,386.2 L225.0,387.0 L224.3,387.7 L223.7,388.5 L223.0,389.2 L222.3,390.0 L221.7,390.8 L221.0,391.6 L220.3,392.4 L219.7,393.2 L219.0,394.0 L218.3,394.8 L217.7,395.6 L217.0,396.4 L216.3,397.3 L215.7,398.1 L215.0,399.0 L214.4,399.8 L213.8,400.5 L213.2,401.3 L212.6,402.1 L212.0,402.9 L211.4,403.8 L210.8,404.6 L210.2,405.4 L209.6,406.2 L209.0,407.1 L208.5,407.9 L207.9,408.7 L207.3,409.6 L206.7,410.4 L206.1,411.3 L205.6,412.1 L205.0,413.0 L204.4,413.9 L203.9,414.7 L203.3,415.6 L202.8,416.5 L202.2,417.4 L201.7,418.3 L201.1,419.2 L200.6,420.1 L200.0,420.9 L199.5,421.8 L199.0,422.7 L198.5,423.6 L198.0,424.5 L197.5,425.4 L197.0,426.3 L196.5,427.1 L196.0,428.0 L195.5,429.0 L195.0,429.9 L194.5,430.8 L194.0,431.8 L193.5,432.7 L193.1,433.6 L192.6,434.5 L192.2,435.4 L191.7,436.3 L191.3,437.2 L190.8,438.1 L190.4,439.1 L189.9,440.0 L189.5,441.0 L189.0,442.0 L188.6,442.9 L188.2,443.8 L187.7,444.7 L187.3,445.7 L186.9,446.6 L186.4,447.6 L186.0,448.5 L185.6,449.5 L185.2,450.5 L184.7,451.5 L184.3,452.4 L183.9,453.4 L183.5,454.3 L183.1,455.3 L182.7,456.2 L182.4,457.1 L182.0,458.0 L181.6,459.1 L181.2,460.1 L180.8,461.1 L180.5,462.1 L180.1,463.1 L179.8,464.1 L179.4,465.1 L179.1,466.0 L178.8,467.0 L178.4,468.0 L178.1,469.0 L177.7,470.0 L177.4,471.0 L177.0,472.0 L176.7,472.9 L176.3,473.9 L176.0,474.9 L175.7,475.9 L175.4,476.9 L175.0,477.9 L174.7,478.9 L174.4,479.9 L174.0,480.9 L173.6,481.9 L173.3,482.8 L172.9,483.7 L172.4,484.6 L172.0,485.5 L171.5,486.3 L171.0,487.0 L170.3,487.8 L169.6,488.6 L168.8,489.4 L167.9,490.1 L167.1,490.7 L166.2,491.3 L165.3,491.9 L164.4,492.4 L163.5,492.9 L162.6,493.4 L161.7,493.8 L160.9,494.2 L160.2,494.6 L159.0,495.1 L157.9,495.5 L156.7,495.8 L155.6,496.0 L154.6,496.1 L153.7,496.2 L153.0,496.3 L152.4,496.4" stroke="#3c3c3c" stroke-width="4.4" fill="none" stroke-linejoin="round" stroke-linecap="round"/>
<path d="M243.0,231.0 L243.1,230.4 L243.3,229.7 L243.5,228.8 L243.7,227.8 L243.9,226.7 L244.2,225.6 L244.4,224.4 L244.7,223.2 L245.0,222.0 L245.3,220.8 L245.6,219.7 L245.9,218.7 L246.2,217.8 L246.5,217.0 L247.1,215.8 L247.7,214.9 L248.4,214.0 L249.1,213.3 L249.8,212.6 L250.5,212.1 L251.3,211.5 L252.0,211.0 L252.9,210.4 L253.7,210.0 L254.5,209.7 L255.4,209.4 L256.5,209.0 L258.0,208.5 L258.7,208.2 L259.5,207.9 L260.4,207.5 L261.4,207.1 L262.4,206.7 L263.5,206.3 L264.5,205.9 L265.6,205.4 L266.7,205.0 L267.7,204.6 L268.7,204.2 L269.6,203.9 L270.5,203.5 L271.3,203.2 L272.0,203.0 L273.6,202.5 L274.6,202.2 L275.4,202.0 L276.1,202.0 L277.0,202.0 L278.0,202.1 L279.0,202.3 L280.1,202.6 L281.1,203.0 L282.0,203.5 L282.9,204.1 L283.8,204.8 L284.6,205.7 L285.3,206.6 L286.0,207.5 L286.5,208.4 L287.0,209.3 L287.5,210.3 L287.9,211.3 L288.2,212.3 L288.3,213.2 L288.6,214.1 L289.0,214.7 L288.6,215.6 L286.8,217.4 L286.3,217.8 L285.8,218.2 L285.2,218.7 L284.6,219.2 L283.9,219.7 L283.2,220.2 L282.4,220.7 L281.6,221.3 L280.8,221.9 L279.9,222.5 L279.0,223.1 L278.1,223.7 L277.2,224.4 L276.3,225.0 L275.3,225.7 L274.4,226.4 L273.4,227.0 L272.5,227.7 L271.5,228.4 L270.5,229.1 L269.6,229.7 L268.7,230.4 L267.8,231.1 L266.9,231.7 L266.0,232.4 L265.2,233.0 L264.4,233.6 L263.7,234.2 L262.9,234.8 L262.0,235.4 L261.2,236.1 L260.4,236.7 L259.6,237.4 L258.7,238.0 L257.9,238.7 L257.1,239.3 L256.2,240.0 L255.4,240.7 L254.6,241.3 L253.8,242.0 L252.9,242.6 L252.1,243.3 L251.3,243.9 L250.5,244.6 L249.7,245.2 L249.0,245.9 L248.2,246.5 L247.5,247.1 L246.7,247.7 L246.0,248.3 L245.3,248.9 L244.7,249.4 L244.0,250.0 L243.1,250.8 L242.1,251.6 L241.2,252.4 L240.3,253.2 L239.5,253.9 L238.6,254.7 L237.8,255.4 L237.0,256.2 L236.2,256.9 L235.5,257.6 L234.7,258.3 L234.0,258.9 L233.4,259.6 L232.7,260.2 L232.1,260.8 L231.5,261.4 L231.0,261.9 L230.5,262.5 L230.0,263.0 L228.7,264.4 L227.8,265.5 L227.1,266.4 L226.7,267.3 L226.5,268.1 L226.5,269.0 L226.7,269.9 L227.1,270.8 L227.6,271.7 L228.3,272.5 L229.2,273.4 L230.1,274.2 L231.0,275.0 L231.7,275.5 L232.5,276.0 L233.4,276.5 L234.3,276.9 L235.3,277.4 L236.2,277.8 L237.2,278.2 L238.2,278.7 L239.1,279.1 L240.0,279.5 L240.9,280.0 L241.8,280.4 L242.7,280.8 L243.5,281.2 L244.4,281.6 L245.3,282.1 L246.2,282.5 L247.2,282.9 L248.2,283.4 L249.0,283.8 L249.9,284.1 L250.8,284.4 L251.8,284.8 L252.8,285.1 L253.7,285.5 L254.7,285.8 L255.7,286.2 L256.6,286.7 L257.5,287.1 L258.4,287.6 L259.2,288.2 L260.0,288.8 L260.8,289.5 L261.6,290.2 L262.3,291.0 L263.0,291.8 L263.7,292.6 L264.4,293.4 L265.0,294.4 L265.6,295.3 L266.1,296.3 L266.6,297.4 L266.9,298.2 L267.3,299.1 L267.6,300.0 L267.9,300.9 L268.1,301.9 L268.4,302.9 L268.6,303.9 L268.8,304.9 L269.0,306.0 L269.2,307.1 L269.4,308.1 L269.5,309.2 L269.7,310.3 L269.8,311.3 L269.9,312.4 L270.0,313.4 L270.1,314.4 L270.2,315.5 L270.2,316.6 L270.3,317.7 L270.4,318.8 L270.4,319.9 L270.4,321.0 L270.4,322.1 L270.4,323.1 L270.4,324.2 L270.3,325.3 L270.3,326.3 L270.2,327.3 L270.0,328.3 L269.9,329.2 L269.7,330.3 L269.5,331.3 L269.2,332.4 L268.9,333.3 L268.6,334.3 L268.3,335.2 L267.9,336.1 L267.5,337.0 L267.0,337.9 L266.6,338.8 L266.0,339.8 L265.5,340.7 L264.9,341.7 L264.4,342.5 L263.9,343.3 L263.3,344.1 L262.7,344.9 L262.0,345.7 L261.4,346.5 L260.7,347.3 L260.0,348.1 L259.3,349.0 L258.6,349.8 L257.9,350.6 L257.2,351.4 L256.5,352.2 L255.8,353.0 L255.1,353.8 L254.5,354.5 L253.9,355.3 L253.2,356.2 L252.5,357.1 L251.9,358.0 L251.2,358.8 L250.6,359.7 L250.0,360.5 L249.4,361.4 L248.8,362.2 L248.2,363.0 L247.6,363.8 L246.9,364.6 L246.3,365.4 L245.7,366.2 L245.0,367.0 L244.3,367.8 L243.6,368.5 L242.9,369.3 L242.2,370.0 L241.5,370.7 L240.8,371.4 L240.1,372.1 L239.3,372.8 L238.6,373.5 L237.9,374.2 L237.2,374.9 L236.4,375.6 L235.7,376.3 L235.0,377.0 L234.3,377.7 L233.6,378.4 L232.9,379.1 L232.1,379.8 L231.4,380.5 L230.7,381.2 L230.0,381.9 L229.3,382.6 L228.6,383.3 L227.9,384.0 L227.1,384.7 L226.4,385.5 L225.7,386.2 L225.0,387.0 L224.3,387.7 L223.7,388.5 L223.0,389.2 L222.3,390.0 L221.7,390.8 L221.0,391.6 L220.3,392.4 L219.7,393.2 L219.0,394.0 L218.3,394.8 L217.7,395.6 L217.0,396.4 L216.3,397.3 L215.7,398.1 L215.0,399.0 L214.4,399.8 L213.8,400.5 L213.2,401.3 L212.6,402.1 L212.0,402.9 L211.4,403.8 L210.8,404.6 L210.2,405.4 L209.6,406.2 L209.0,407.1 L208.5,407.9 L207.9,408.7 L207.3,409.6 L206.7,410.4 L206.1,411.3 L205.6,412.1 L205.0,413.0 L204.4,413.9 L203.9,414.7 L203.3,415.6 L202.8,416.5 L202.2,417.4 L201.7,418.3 L201.1,419.2 L200.6,420.1 L200.0,420.9 L199.5,421.8 L199.0,422.7 L198.5,423.6 L198.0,424.5 L197.5,425.4 L197.0,426.3 L196.5,427.1 L196.0,428.0 L195.5,429.0 L195.0,429.9 L194.5,430.8 L194.0,431.8 L193.5,432.7 L193.1,433.6 L192.6,434.5 L192.2,435.4 L191.7,436.3 L191.3,437.2 L190.8,438.1 L190.4,439.1 L189.9,440.0 L189.5,441.0 L189.0,442.0 L188.6,442.9 L188.2,443.8 L187.7,444.7 L187.3,445.7 L186.9,446.6 L186.4,447.6 L186.0,448.5 L185.6,449.5 L185.2,450.5 L184.7,451.5 L184.3,452.4 L183.9,453.4 L183.5,454.3 L183.1,455.3 L182.7,456.2 L182.4,457.1 L182.0,458.0 L181.6,459.1 L181.2,460.1 L180.8,461.1 L180.5,462.1 L180.1,463.1 L179.8,464.1 L179.4,465.1 L179.1,466.0 L178.8,467.0 L178.4,468.0 L178.1,469.0 L177.7,470.0 L177.4,471.0 L177.0,472.0 L176.7,472.9 L176.3,473.9 L176.0,474.9 L175.7,475.9 L175.4,476.9 L175.0,477.9 L174.7,478.9 L174.4,479.9 L174.0,480.9 L173.6,481.9 L173.3,482.8 L172.9,483.7 L172.4,484.6 L172.0,485.5 L171.5,486.3 L171.0,487.0 L170.3,487.8 L169.6,488.6 L168.8,489.4 L167.9,490.1 L167.1,490.7 L166.2,491.3 L165.3,491.9 L164.4,492.4 L163.5,492.9 L162.6,493.4 L161.7,493.8 L160.9,494.2 L160.2,494.6 L159.0,495.1 L157.9,495.5 L156.7,495.8 L155.6,496.0 L154.6,496.1 L153.7,496.2 L153.0,496.3 L152.4,496.4" stroke="#fff" stroke-width="2.7" fill="none" stroke-linejoin="round" stroke-linecap="round"/>
<path d="M188.0,262.0 L188.2,261.5 L188.4,260.8 L188.7,260.0 L189.0,259.1 L189.3,258.1 L189.7,257.1 L190.0,256.0 L190.4,254.9 L190.9,253.8 L191.3,252.7 L191.8,251.6 L192.4,250.6 L192.9,249.7 L193.4,248.9 L193.9,248.1 L194.3,247.3 L194.7,246.6 L195.2,245.8 L195.6,245.1 L196.2,244.3 L196.7,243.6 L197.4,242.8 L198.2,242.0 L199.1,241.2 L200.1,240.4 L201.3,239.5 L202.6,238.6 L203.2,238.2 L203.9,237.8 L204.7,237.3 L205.5,236.9 L206.3,236.4 L207.2,235.9 L208.1,235.4 L209.1,234.9 L210.1,234.3 L211.1,233.8 L212.2,233.3 L213.2,232.8 L214.3,232.2 L215.4,231.7 L216.5,231.1 L217.6,230.6 L218.7,230.1 L219.8,229.5 L220.9,229.0 L221.9,228.5 L223.0,228.0 L224.0,227.5 L225.0,227.0 L226.0,226.6 L227.0,226.1 L227.9,225.7 L228.8,225.3 L229.6,224.9 L230.4,224.6 L231.1,224.2 L231.8,223.9 L232.4,223.7 L233.0,223.4 L235.9,222.2 L236.8,222.1 L236.9,222.5 L237.5,223.0 L238.5,223.4 L239.6,223.9 L240.6,224.5 L241.6,225.2 L242.5,226.0 L243.3,226.9 L244.0,227.8 L244.6,228.8 L245.1,229.9 L245.5,231.0 L245.7,232.0 L245.8,233.0 L245.8,234.0 L245.7,235.0 L245.5,236.0 L245.3,237.0 L245.1,237.8 L245.0,238.4 L244.6,239.0 L243.7,240.1 L242.0,242.0 L241.6,242.5 L241.0,243.0 L240.5,243.6 L239.9,244.3 L239.2,245.0 L238.5,245.7 L237.8,246.5 L237.0,247.2 L236.2,248.1 L235.4,248.9 L234.6,249.7 L233.7,250.6 L232.9,251.5 L232.0,252.3 L231.2,253.2 L230.3,254.1 L229.5,254.9 L228.7,255.8 L227.9,256.6 L227.1,257.4 L226.4,258.2 L225.7,258.9 L225.1,259.6 L224.5,260.3 L223.9,260.9 L223.4,261.5 L223.0,262.0 L221.5,263.9 L220.7,265.2 L220.3,266.1 L220.2,266.8 L220.3,267.6 L220.5,268.5 L220.7,269.4 L221.1,270.4 L221.7,271.3 L222.4,272.2 L223.2,273.2 L224.1,274.1 L225.0,275.0 L225.7,275.6 L226.5,276.3 L227.4,276.9 L228.3,277.5 L229.2,278.1 L230.2,278.7 L231.1,279.3 L232.1,279.9 L233.1,280.5 L234.0,281.0 L234.9,281.5 L235.8,282.0 L236.7,282.5 L237.7,283.0 L238.6,283.5 L239.5,284.0 L240.4,284.4 L241.4,284.9 L242.4,285.3 L243.4,285.8 L244.4,286.2 L245.3,286.6 L246.4,287.0 L247.4,287.3 L248.5,287.7 L249.5,288.1 L250.6,288.5 L251.6,288.9 L252.6,289.3 L253.5,289.8 L254.4,290.4 L255.2,291.0 L256.1,291.6 L256.9,292.3 L257.6,292.9 L258.4,293.6 L259.1,294.4 L259.8,295.2 L260.5,296.0 L261.1,296.9 L261.7,297.8 L262.2,298.8 L262.6,299.6 L263.0,300.5 L263.3,301.4 L263.6,302.3 L263.9,303.3 L264.2,304.3 L264.5,305.4 L264.7,306.4 L265.0,307.5 L265.2,308.5 L265.3,309.6 L265.5,310.7 L265.7,311.7 L265.8,312.8 L265.9,313.8 L266.0,314.8 L266.1,315.9 L266.2,316.9 L266.3,318.0 L266.3,319.1 L266.3,320.2 L266.3,321.3 L266.3,322.3 L266.3,323.4 L266.3,324.5 L266.2,325.5 L266.1,326.5 L266.0,327.5 L265.8,328.4 L265.6,329.4 L265.4,330.4 L265.1,331.4 L264.8,332.3 L264.5,333.2 L264.1,334.1 L263.7,335.0 L263.3,335.9 L262.9,336.8 L262.4,337.7 L261.9,338.6 L261.4,339.5 L260.8,340.4 L260.3,341.2 L259.8,342.0 L259.2,342.8 L258.6,343.6 L258.0,344.4 L257.4,345.2 L256.7,346.0 L256.0,346.8 L255.4,347.6 L254.7,348.4 L254.0,349.2 L253.3,350.0 L252.7,350.8 L252.0,351.6 L251.4,352.4 L250.8,353.1 L250.1,353.9 L249.5,354.8 L248.9,355.6 L248.2,356.4 L247.6,357.2 L247.0,357.9 L246.4,358.7 L245.8,359.5 L245.2,360.2 L244.6,361.0 L243.9,361.8 L243.3,362.5 L242.7,363.3 L242.0,364.0 L241.3,364.7 L240.6,365.5 L239.9,366.2 L239.2,366.9 L238.5,367.6 L237.8,368.3 L237.1,369.1 L236.3,369.8 L235.6,370.5 L234.9,371.2 L234.2,371.9 L233.4,372.6 L232.7,373.3 L232.0,374.0 L231.3,374.7 L230.6,375.4 L229.9,376.1 L229.1,376.8 L228.4,377.5 L227.7,378.2 L227.0,378.9 L226.3,379.6 L225.6,380.3 L224.9,381.0 L224.1,381.7 L223.4,382.5 L222.7,383.2 L222.0,384.0 L221.3,384.7 L220.7,385.5 L220.0,386.2 L219.3,387.0 L218.6,387.8 L217.9,388.6 L217.2,389.4 L216.5,390.2 L215.9,391.0 L215.2,391.8 L214.5,392.6 L213.9,393.4 L213.2,394.3 L212.6,395.1 L212.0,396.0 L211.4,396.8 L210.9,397.6 L210.4,398.5 L209.8,399.3 L209.3,400.2 L208.8,401.1 L208.3,401.9 L207.8,402.8 L207.3,403.7 L206.8,404.6 L206.4,405.5 L205.9,406.4 L205.4,407.3 L204.9,408.2 L204.5,409.1 L204.0,410.0 L203.5,410.9 L203.1,411.8 L202.6,412.7 L202.2,413.6 L201.7,414.5 L201.3,415.5 L200.9,416.4 L200.4,417.3 L200.0,418.2 L199.6,419.2 L199.2,420.1 L198.7,421.1 L198.3,422.0 L197.9,423.0 L197.4,424.0 L197.0,425.0 L196.6,425.9 L196.2,426.8 L195.9,427.7 L195.5,428.6 L195.1,429.5 L194.8,430.5 L194.4,431.4 L194.1,432.4 L193.7,433.3 L193.3,434.3 L192.9,435.2 L192.6,436.2 L192.2,437.1 L191.8,438.1 L191.3,439.1 L190.9,440.1 L190.5,441.0 L190.0,442.0 L189.6,442.9 L189.2,443.8 L188.7,444.7 L188.3,445.6 L187.9,446.5 L187.5,447.4 L187.0,448.3 L186.6,449.3 L186.1,450.2 L185.7,451.1 L185.2,452.0 L184.7,453.0 L184.2,453.9 L183.7,454.8 L183.1,455.7 L182.6,456.6 L182.0,457.5 L181.3,458.3 L180.7,459.2 L180.0,460.0 L179.4,460.7 L178.7,461.4 L178.1,462.2 L177.4,462.9 L176.7,463.6 L176.0,464.3 L175.2,465.0 L174.5,465.8 L173.7,466.5 L172.9,467.2 L172.2,467.8 L171.3,468.5 L170.5,469.2 L169.7,469.9 L168.9,470.5 L168.0,471.1 L167.2,471.7 L166.3,472.3 L165.5,472.9 L164.6,473.5 L163.7,474.0 L162.9,474.5 L162.0,475.0 L161.1,475.5 L160.2,475.9 L159.3,476.3 L158.3,476.7 L157.4,477.1 L156.4,477.4 L155.4,477.8 L154.4,478.1 L153.4,478.4 L152.4,478.7 L151.4,478.9 L150.4,479.2 L149.4,479.5 L148.4,479.7 L147.4,480.0 L146.4,480.2 L145.4,480.4 L144.5,480.7 L143.5,480.9 L142.6,481.2 L141.7,481.5 L140.8,481.7 L140.0,482.0 L138.9,482.4 L137.7,482.8 L136.6,483.2 L135.5,483.6 L134.4,484.0 L133.3,484.4 L132.2,484.8 L131.1,485.2 L130.1,485.6 L129.1,486.0 L128.2,486.4 L127.4,486.7 L126.5,487.0 L125.8,487.3 L125.1,487.6 L124.5,487.8 L124.0,488.0" stroke="#3c3c3c" stroke-width="4.4" fill="none" stroke-linejoin="round" stroke-linecap="round"/>
<path d="M188.0,262.0 L188.2,261.5 L188.4,260.8 L188.7,260.0 L189.0,259.1 L189.3,258.1 L189.7,257.1 L190.0,256.0 L190.4,254.9 L190.9,253.8 L191.3,252.7 L191.8,251.6 L192.4,250.6 L192.9,249.7 L193.4,248.9 L193.9,248.1 L194.3,247.3 L194.7,246.6 L195.2,245.8 L195.6,245.1 L196.2,244.3 L196.7,243.6 L197.4,242.8 L198.2,242.0 L199.1,241.2 L200.1,240.4 L201.3,239.5 L202.6,238.6 L203.2,238.2 L203.9,237.8 L204.7,237.3 L205.5,236.9 L206.3,236.4 L207.2,235.9 L208.1,235.4 L209.1,234.9 L210.1,234.3 L211.1,233.8 L212.2,233.3 L213.2,232.8 L214.3,232.2 L215.4,231.7 L216.5,231.1 L217.6,230.6 L218.7,230.1 L219.8,229.5 L220.9,229.0 L221.9,228.5 L223.0,228.0 L224.0,227.5 L225.0,227.0 L226.0,226.6 L227.0,226.1 L227.9,225.7 L228.8,225.3 L229.6,224.9 L230.4,224.6 L231.1,224.2 L231.8,223.9 L232.4,223.7 L233.0,223.4 L235.9,222.2 L236.8,222.1 L236.9,222.5 L237.5,223.0 L238.5,223.4 L239.6,223.9 L240.6,224.5 L241.6,225.2 L242.5,226.0 L243.3,226.9 L244.0,227.8 L244.6,228.8 L245.1,229.9 L245.5,231.0 L245.7,232.0 L245.8,233.0 L245.8,234.0 L245.7,235.0 L245.5,236.0 L245.3,237.0 L245.1,237.8 L245.0,238.4 L244.6,239.0 L243.7,240.1 L242.0,242.0 L241.6,242.5 L241.0,243.0 L240.5,243.6 L239.9,244.3 L239.2,245.0 L238.5,245.7 L237.8,246.5 L237.0,247.2 L236.2,248.1 L235.4,248.9 L234.6,249.7 L233.7,250.6 L232.9,251.5 L232.0,252.3 L231.2,253.2 L230.3,254.1 L229.5,254.9 L228.7,255.8 L227.9,256.6 L227.1,257.4 L226.4,258.2 L225.7,258.9 L225.1,259.6 L224.5,260.3 L223.9,260.9 L223.4,261.5 L223.0,262.0 L221.5,263.9 L220.7,265.2 L220.3,266.1 L220.2,266.8 L220.3,267.6 L220.5,268.5 L220.7,269.4 L221.1,270.4 L221.7,271.3 L222.4,272.2 L223.2,273.2 L224.1,274.1 L225.0,275.0 L225.7,275.6 L226.5,276.3 L227.4,276.9 L228.3,277.5 L229.2,278.1 L230.2,278.7 L231.1,279.3 L232.1,279.9 L233.1,280.5 L234.0,281.0 L234.9,281.5 L235.8,282.0 L236.7,282.5 L237.7,283.0 L238.6,283.5 L239.5,284.0 L240.4,284.4 L241.4,284.9 L242.4,285.3 L243.4,285.8 L244.4,286.2 L245.3,286.6 L246.4,287.0 L247.4,287.3 L248.5,287.7 L249.5,288.1 L250.6,288.5 L251.6,288.9 L252.6,289.3 L253.5,289.8 L254.4,290.4 L255.2,291.0 L256.1,291.6 L256.9,292.3 L257.6,292.9 L258.4,293.6 L259.1,294.4 L259.8,295.2 L260.5,296.0 L261.1,296.9 L261.7,297.8 L262.2,298.8 L262.6,299.6 L263.0,300.5 L263.3,301.4 L263.6,302.3 L263.9,303.3 L264.2,304.3 L264.5,305.4 L264.7,306.4 L265.0,307.5 L265.2,308.5 L265.3,309.6 L265.5,310.7 L265.7,311.7 L265.8,312.8 L265.9,313.8 L266.0,314.8 L266.1,315.9 L266.2,316.9 L266.3,318.0 L266.3,319.1 L266.3,320.2 L266.3,321.3 L266.3,322.3 L266.3,323.4 L266.3,324.5 L266.2,325.5 L266.1,326.5 L266.0,327.5 L265.8,328.4 L265.6,329.4 L265.4,330.4 L265.1,331.4 L264.8,332.3 L264.5,333.2 L264.1,334.1 L263.7,335.0 L263.3,335.9 L262.9,336.8 L262.4,337.7 L261.9,338.6 L261.4,339.5 L260.8,340.4 L260.3,341.2 L259.8,342.0 L259.2,342.8 L258.6,343.6 L258.0,344.4 L257.4,345.2 L256.7,346.0 L256.0,346.8 L255.4,347.6 L254.7,348.4 L254.0,349.2 L253.3,350.0 L252.7,350.8 L252.0,351.6 L251.4,352.4 L250.8,353.1 L250.1,353.9 L249.5,354.8 L248.9,355.6 L248.2,356.4 L247.6,357.2 L247.0,357.9 L246.4,358.7 L245.8,359.5 L245.2,360.2 L244.6,361.0 L243.9,361.8 L243.3,362.5 L242.7,363.3 L242.0,364.0 L241.3,364.7 L240.6,365.5 L239.9,366.2 L239.2,366.9 L238.5,367.6 L237.8,368.3 L237.1,369.1 L236.3,369.8 L235.6,370.5 L234.9,371.2 L234.2,371.9 L233.4,372.6 L232.7,373.3 L232.0,374.0 L231.3,374.7 L230.6,375.4 L229.9,376.1 L229.1,376.8 L228.4,377.5 L227.7,378.2 L227.0,378.9 L226.3,379.6 L225.6,380.3 L224.9,381.0 L224.1,381.7 L223.4,382.5 L222.7,383.2 L222.0,384.0 L221.3,384.7 L220.7,385.5 L220.0,386.2 L219.3,387.0 L218.6,387.8 L217.9,388.6 L217.2,389.4 L216.5,390.2 L215.9,391.0 L215.2,391.8 L214.5,392.6 L213.9,393.4 L213.2,394.3 L212.6,395.1 L212.0,396.0 L211.4,396.8 L210.9,397.6 L210.4,398.5 L209.8,399.3 L209.3,400.2 L208.8,401.1 L208.3,401.9 L207.8,402.8 L207.3,403.7 L206.8,404.6 L206.4,405.5 L205.9,406.4 L205.4,407.3 L204.9,408.2 L204.5,409.1 L204.0,410.0 L203.5,410.9 L203.1,411.8 L202.6,412.7 L202.2,413.6 L201.7,414.5 L201.3,415.5 L200.9,416.4 L200.4,417.3 L200.0,418.2 L199.6,419.2 L199.2,420.1 L198.7,421.1 L198.3,422.0 L197.9,423.0 L197.4,424.0 L197.0,425.0 L196.6,425.9 L196.2,426.8 L195.9,427.7 L195.5,428.6 L195.1,429.5 L194.8,430.5 L194.4,431.4 L194.1,432.4 L193.7,433.3 L193.3,434.3 L192.9,435.2 L192.6,436.2 L192.2,437.1 L191.8,438.1 L191.3,439.1 L190.9,440.1 L190.5,441.0 L190.0,442.0 L189.6,442.9 L189.2,443.8 L188.7,444.7 L188.3,445.6 L187.9,446.5 L187.5,447.4 L187.0,448.3 L186.6,449.3 L186.1,450.2 L185.7,451.1 L185.2,452.0 L184.7,453.0 L184.2,453.9 L183.7,454.8 L183.1,455.7 L182.6,456.6 L182.0,457.5 L181.3,458.3 L180.7,459.2 L180.0,460.0 L179.4,460.7 L178.7,461.4 L178.1,462.2 L177.4,462.9 L176.7,463.6 L176.0,464.3 L175.2,465.0 L174.5,465.8 L173.7,466.5 L172.9,467.2 L172.2,467.8 L171.3,468.5 L170.5,469.2 L169.7,469.9 L168.9,470.5 L168.0,471.1 L167.2,471.7 L166.3,472.3 L165.5,472.9 L164.6,473.5 L163.7,474.0 L162.9,474.5 L162.0,475.0 L161.1,475.5 L160.2,475.9 L159.3,476.3 L158.3,476.7 L157.4,477.1 L156.4,477.4 L155.4,477.8 L154.4,478.1 L153.4,478.4 L152.4,478.7 L151.4,478.9 L150.4,479.2 L149.4,479.5 L148.4,479.7 L147.4,480.0 L146.4,480.2 L145.4,480.4 L144.5,480.7 L143.5,480.9 L142.6,481.2 L141.7,481.5 L140.8,481.7 L140.0,482.0 L138.9,482.4 L137.7,482.8 L136.6,483.2 L135.5,483.6 L134.4,484.0 L133.3,484.4 L132.2,484.8 L131.1,485.2 L130.1,485.6 L129.1,486.0 L128.2,486.4 L127.4,486.7 L126.5,487.0 L125.8,487.3 L125.1,487.6 L124.5,487.8 L124.0,488.0" stroke="#fff" stroke-width="2.7" fill="none" stroke-linejoin="round" stroke-linecap="round"/>
<path d="M136.0,291.0 L136.3,290.4 L136.8,289.6 L137.3,288.6 L137.9,287.4 L138.5,286.0 L138.8,285.2 L139.1,284.3 L139.4,283.3 L139.7,282.2 L140.1,281.1 L140.4,280.1 L140.8,279.0 L141.2,278.0 L141.6,277.1 L142.1,276.3 L142.7,275.4 L143.1,274.9 L143.5,274.4 L144.0,274.0 L144.9,273.4 L146.2,272.7 L148.2,271.5 L148.8,271.2 L149.4,270.8 L150.1,270.4 L150.9,270.0 L151.7,269.5 L152.6,269.0 L153.5,268.5 L154.5,268.0 L155.5,267.5 L156.5,266.9 L157.5,266.4 L158.5,265.8 L159.6,265.2 L160.7,264.6 L161.8,264.1 L162.8,263.5 L163.9,262.9 L165.0,262.4 L166.0,261.8 L167.0,261.3 L168.0,260.7 L169.0,260.2 L169.9,259.7 L170.8,259.2 L171.6,258.8 L172.4,258.4 L173.2,258.0 L173.8,257.6 L174.5,257.3 L175.0,257.0 L177.9,255.4 L178.2,255.3 L178.5,255.2 L179.7,254.8 L180.8,254.4 L182.0,254.3 L183.2,254.3 L184.3,254.6 L185.5,255.0 L186.1,255.4 L186.6,255.8 L187.4,256.5 L189.0,257.5 L189.6,257.9 L190.3,258.2 L191.0,258.7 L191.8,259.1 L192.6,259.6 L193.5,260.0 L194.4,260.6 L195.3,261.1 L196.3,261.6 L197.3,262.2 L198.4,262.8 L199.4,263.4 L200.5,264.1 L201.6,264.7 L202.7,265.4 L203.4,265.9 L204.2,266.3 L205.0,266.8 L205.8,267.3 L206.6,267.9 L207.4,268.4 L208.2,269.0 L209.1,269.5 L210.0,270.1 L210.8,270.7 L211.7,271.3 L212.6,271.8 L213.5,272.4 L214.4,273.0 L215.3,273.6 L216.1,274.2 L217.0,274.8 L217.9,275.3 L218.7,275.9 L219.6,276.4 L220.4,277.0 L221.2,277.5 L222.0,278.0 L222.9,278.6 L223.9,279.2 L224.8,279.8 L225.8,280.4 L226.7,281.0 L227.6,281.6 L228.6,282.2 L229.5,282.8 L230.4,283.3 L231.3,283.9 L232.1,284.4 L233.0,285.0 L233.9,285.5 L234.7,286.0 L235.5,286.5 L236.3,286.9 L237.1,287.4 L237.9,287.8 L238.6,288.2 L239.8,288.8 L241.0,289.3 L242.1,289.7 L243.1,290.1 L244.1,290.4 L245.1,290.7 L246.0,291.0 L247.0,291.3 L247.8,291.7 L248.7,292.1 L249.6,292.6 L250.5,293.2 L251.3,293.7 L252.2,294.3 L253.0,294.9 L253.8,295.5 L254.5,296.2 L255.3,296.9 L255.9,297.7 L256.6,298.4 L257.2,299.3 L257.8,300.2 L258.3,301.0 L258.7,301.9 L259.1,302.8 L259.4,303.8 L259.8,304.7 L260.1,305.8 L260.4,306.8 L260.7,307.9 L260.9,308.9 L261.2,310.0 L261.4,311.1 L261.5,312.1 L261.7,313.2 L261.8,314.2 L261.9,315.2 L262.0,316.2 L262.1,317.3 L262.2,318.4 L262.2,319.4 L262.3,320.5 L262.3,321.6 L262.2,322.6 L262.2,323.7 L262.1,324.7 L262.0,325.7 L261.9,326.7 L261.7,327.6 L261.5,328.7 L261.2,329.7 L260.9,330.7 L260.6,331.6 L260.2,332.6 L259.8,333.5 L259.3,334.4 L258.8,335.4 L258.3,336.3 L257.8,337.2 L257.3,338.1 L256.7,339.1 L256.2,339.9 L255.6,340.8 L255.0,341.7 L254.3,342.6 L253.6,343.5 L252.9,344.4 L252.2,345.3 L251.5,346.2 L250.8,347.1 L250.1,347.9 L249.5,348.7 L248.8,349.5 L248.3,350.2 L247.7,350.9 L246.8,352.0 L246.0,352.9 L245.3,353.8 L244.7,354.5 L244.0,355.3 L243.4,356.0 L242.7,356.7 L242.0,357.5 L241.3,358.3 L240.6,359.1 L239.9,359.9 L239.1,360.7 L238.4,361.5 L237.6,362.3 L236.8,363.1 L236.0,364.0 L235.4,364.7 L234.7,365.4 L234.1,366.1 L233.4,366.9 L232.7,367.6 L232.0,368.4 L231.3,369.1 L230.5,369.9 L229.7,370.6 L228.9,371.3 L228.0,372.0 L227.2,372.6 L226.4,373.1 L225.5,373.7 L224.6,374.3 L223.6,374.8 L222.7,375.4 L221.7,375.9 L220.7,376.4 L219.8,376.9 L218.8,377.3 L217.8,377.8 L216.9,378.2 L216.0,378.5 L214.9,378.9 L213.9,379.2 L212.8,379.4 L211.8,379.6 L210.7,379.8 L209.7,379.9 L208.6,380.1 L207.6,380.2 L206.6,380.3 L205.7,380.4 L204.7,380.5 L203.5,380.6 L202.4,380.5 L201.3,380.4 L200.2,380.2 L199.1,380.1 L198.1,380.1 L197.1,380.2 L196.1,380.5 L195.2,381.0 L194.6,381.5 L194.0,382.1 L193.5,382.8 L193.0,383.6 L192.5,384.4 L192.0,385.3 L191.5,386.2 L191.1,387.3 L190.6,388.4 L190.1,389.5 L189.6,390.7 L189.0,392.0 L188.7,392.8 L188.3,393.6 L187.9,394.4 L187.5,395.3 L187.2,396.2 L186.8,397.1 L186.4,398.1 L185.9,399.1 L185.5,400.0 L185.1,401.1 L184.7,402.1 L184.3,403.1 L183.9,404.1 L183.5,405.1 L183.1,406.2 L182.7,407.2 L182.4,408.2 L182.0,409.2 L181.7,410.1 L181.3,411.1 L181.0,412.0 L180.6,413.1 L180.3,414.1 L180.0,415.2 L179.7,416.2 L179.4,417.3 L179.1,418.3 L178.9,419.3 L178.6,420.4 L178.4,421.4 L178.1,422.4 L177.9,423.4 L177.6,424.4 L177.4,425.3 L177.1,426.3 L176.9,427.3 L176.6,428.2 L176.3,429.1 L176.0,430.0 L175.7,431.1 L175.4,432.1 L175.1,433.1 L174.8,434.1 L174.6,435.0 L174.3,436.0 L174.1,436.9 L173.8,437.8 L173.5,438.7 L173.1,439.6 L172.6,440.5 L172.1,441.4 L171.5,442.3 L170.8,443.1 L170.0,444.0 L169.4,444.6 L168.8,445.1 L168.1,445.7 L167.3,446.2 L166.5,446.8 L165.7,447.3 L164.9,447.9 L164.0,448.4 L163.1,448.9 L162.2,449.5 L161.2,450.0 L160.3,450.5 L159.3,451.0 L158.3,451.5 L157.4,452.1 L156.4,452.6 L155.4,453.1 L154.5,453.6 L153.5,454.1 L152.6,454.5 L151.7,455.0 L150.8,455.5 L150.0,456.0 L149.0,456.5 L148.1,457.1 L147.1,457.6 L146.2,458.2 L145.2,458.7 L144.3,459.3 L143.3,459.8 L142.4,460.3 L141.4,460.9 L140.5,461.4 L139.6,461.9 L138.7,462.4 L137.8,462.9 L136.9,463.4 L136.0,463.8 L135.2,464.3 L134.4,464.7 L133.5,465.2 L132.8,465.6 L132.0,466.0 L130.8,466.6 L129.7,467.2 L128.6,467.8 L127.5,468.3 L126.4,468.9 L125.4,469.4 L124.4,469.9 L123.5,470.3 L122.6,470.7 L121.8,471.1 L121.1,471.4 L120.5,471.7 L120.0,472.0" stroke="#3c3c3c" stroke-width="4.4" fill="none" stroke-linejoin="round" stroke-linecap="round"/>
<path d="M136.0,291.0 L136.3,290.4 L136.8,289.6 L137.3,288.6 L137.9,287.4 L138.5,286.0 L138.8,285.2 L139.1,284.3 L139.4,283.3 L139.7,282.2 L140.1,281.1 L140.4,280.1 L140.8,279.0 L141.2,278.0 L141.6,277.1 L142.1,276.3 L142.7,275.4 L143.1,274.9 L143.5,274.4 L144.0,274.0 L144.9,273.4 L146.2,272.7 L148.2,271.5 L148.8,271.2 L149.4,270.8 L150.1,270.4 L150.9,270.0 L151.7,269.5 L152.6,269.0 L153.5,268.5 L154.5,268.0 L155.5,267.5 L156.5,266.9 L157.5,266.4 L158.5,265.8 L159.6,265.2 L160.7,264.6 L161.8,264.1 L162.8,263.5 L163.9,262.9 L165.0,262.4 L166.0,261.8 L167.0,261.3 L168.0,260.7 L169.0,260.2 L169.9,259.7 L170.8,259.2 L171.6,258.8 L172.4,258.4 L173.2,258.0 L173.8,257.6 L174.5,257.3 L175.0,257.0 L177.9,255.4 L178.2,255.3 L178.5,255.2 L179.7,254.8 L180.8,254.4 L182.0,254.3 L183.2,254.3 L184.3,254.6 L185.5,255.0 L186.1,255.4 L186.6,255.8 L187.4,256.5 L189.0,257.5 L189.6,257.9 L190.3,258.2 L191.0,258.7 L191.8,259.1 L192.6,259.6 L193.5,260.0 L194.4,260.6 L195.3,261.1 L196.3,261.6 L197.3,262.2 L198.4,262.8 L199.4,263.4 L200.5,264.1 L201.6,264.7 L202.7,265.4 L203.4,265.9 L204.2,266.3 L205.0,266.8 L205.8,267.3 L206.6,267.9 L207.4,268.4 L208.2,269.0 L209.1,269.5 L210.0,270.1 L210.8,270.7 L211.7,271.3 L212.6,271.8 L213.5,272.4 L214.4,273.0 L215.3,273.6 L216.1,274.2 L217.0,274.8 L217.9,275.3 L218.7,275.9 L219.6,276.4 L220.4,277.0 L221.2,277.5 L222.0,278.0 L222.9,278.6 L223.9,279.2 L224.8,279.8 L225.8,280.4 L226.7,281.0 L227.6,281.6 L228.6,282.2 L229.5,282.8 L230.4,283.3 L231.3,283.9 L232.1,284.4 L233.0,285.0 L233.9,285.5 L234.7,286.0 L235.5,286.5 L236.3,286.9 L237.1,287.4 L237.9,287.8 L238.6,288.2 L239.8,288.8 L241.0,289.3 L242.1,289.7 L243.1,290.1 L244.1,290.4 L245.1,290.7 L246.0,291.0 L247.0,291.3 L247.8,291.7 L248.7,292.1 L249.6,292.6 L250.5,293.2 L251.3,293.7 L252.2,294.3 L253.0,294.9 L253.8,295.5 L254.5,296.2 L255.3,296.9 L255.9,297.7 L256.6,298.4 L257.2,299.3 L257.8,300.2 L258.3,301.0 L258.7,301.9 L259.1,302.8 L259.4,303.8 L259.8,304.7 L260.1,305.8 L260.4,306.8 L260.7,307.9 L260.9,308.9 L261.2,310.0 L261.4,311.1 L261.5,312.1 L261.7,313.2 L261.8,314.2 L261.9,315.2 L262.0,316.2 L262.1,317.3 L262.2,318.4 L262.2,319.4 L262.3,320.5 L262.3,321.6 L262.2,322.6 L262.2,323.7 L262.1,324.7 L262.0,325.7 L261.9,326.7 L261.7,327.6 L261.5,328.7 L261.2,329.7 L260.9,330.7 L260.6,331.6 L260.2,332.6 L259.8,333.5 L259.3,334.4 L258.8,335.4 L258.3,336.3 L257.8,337.2 L257.3,338.1 L256.7,339.1 L256.2,339.9 L255.6,340.8 L255.0,341.7 L254.3,342.6 L253.6,343.5 L252.9,344.4 L252.2,345.3 L251.5,346.2 L250.8,347.1 L250.1,347.9 L249.5,348.7 L248.8,349.5 L248.3,350.2 L247.7,350.9 L246.8,352.0 L246.0,352.9 L245.3,353.8 L244.7,354.5 L244.0,355.3 L243.4,356.0 L242.7,356.7 L242.0,357.5 L241.3,358.3 L240.6,359.1 L239.9,359.9 L239.1,360.7 L238.4,361.5 L237.6,362.3 L236.8,363.1 L236.0,364.0 L235.4,364.7 L234.7,365.4 L234.1,366.1 L233.4,366.9 L232.7,367.6 L232.0,368.4 L231.3,369.1 L230.5,369.9 L229.7,370.6 L228.9,371.3 L228.0,372.0 L227.2,372.6 L226.4,373.1 L225.5,373.7 L224.6,374.3 L223.6,374.8 L222.7,375.4 L221.7,375.9 L220.7,376.4 L219.8,376.9 L218.8,377.3 L217.8,377.8 L216.9,378.2 L216.0,378.5 L214.9,378.9 L213.9,379.2 L212.8,379.4 L211.8,379.6 L210.7,379.8 L209.7,379.9 L208.6,380.1 L207.6,380.2 L206.6,380.3 L205.7,380.4 L204.7,380.5 L203.5,380.6 L202.4,380.5 L201.3,380.4 L200.2,380.2 L199.1,380.1 L198.1,380.1 L197.1,380.2 L196.1,380.5 L195.2,381.0 L194.6,381.5 L194.0,382.1 L193.5,382.8 L193.0,383.6 L192.5,384.4 L192.0,385.3 L191.5,386.2 L191.1,387.3 L190.6,388.4 L190.1,389.5 L189.6,390.7 L189.0,392.0 L188.7,392.8 L188.3,393.6 L187.9,394.4 L187.5,395.3 L187.2,396.2 L186.8,397.1 L186.4,398.1 L185.9,399.1 L185.5,400.0 L185.1,401.1 L184.7,402.1 L184.3,403.1 L183.9,404.1 L183.5,405.1 L183.1,406.2 L182.7,407.2 L182.4,408.2 L182.0,409.2 L181.7,410.1 L181.3,411.1 L181.0,412.0 L180.6,413.1 L180.3,414.1 L180.0,415.2 L179.7,416.2 L179.4,417.3 L179.1,418.3 L178.9,419.3 L178.6,420.4 L178.4,421.4 L178.1,422.4 L177.9,423.4 L177.6,424.4 L177.4,425.3 L177.1,426.3 L176.9,427.3 L176.6,428.2 L176.3,429.1 L176.0,430.0 L175.7,431.1 L175.4,432.1 L175.1,433.1 L174.8,434.1 L174.6,435.0 L174.3,436.0 L174.1,436.9 L173.8,437.8 L173.5,438.7 L173.1,439.6 L172.6,440.5 L172.1,441.4 L171.5,442.3 L170.8,443.1 L170.0,444.0 L169.4,444.6 L168.8,445.1 L168.1,445.7 L167.3,446.2 L166.5,446.8 L165.7,447.3 L164.9,447.9 L164.0,448.4 L163.1,448.9 L162.2,449.5 L161.2,450.0 L160.3,450.5 L159.3,451.0 L158.3,451.5 L157.4,452.1 L156.4,452.6 L155.4,453.1 L154.5,453.6 L153.5,454.1 L152.6,454.5 L151.7,455.0 L150.8,455.5 L150.0,456.0 L149.0,456.5 L148.1,457.1 L147.1,457.6 L146.2,458.2 L145.2,458.7 L144.3,459.3 L143.3,459.8 L142.4,460.3 L141.4,460.9 L140.5,461.4 L139.6,461.9 L138.7,462.4 L137.8,462.9 L136.9,463.4 L136.0,463.8 L135.2,464.3 L134.4,464.7 L133.5,465.2 L132.8,465.6 L132.0,466.0 L130.8,466.6 L129.7,467.2 L128.6,467.8 L127.5,468.3 L126.4,468.9 L125.4,469.4 L124.4,469.9 L123.5,470.3 L122.6,470.7 L121.8,471.1 L121.1,471.4 L120.5,471.7 L120.0,472.0" stroke="#fff" stroke-width="2.7" fill="none" stroke-linejoin="round" stroke-linecap="round"/>
<path d="M82.0,321.0 L82.1,320.4 L82.2,319.5 L82.3,318.5 L82.4,317.4 L82.6,316.2 L82.8,315.1 L83.1,314.0 L83.4,313.0 L83.9,312.0 L84.5,310.9 L85.1,309.9 L85.8,308.9 L86.6,308.0 L87.3,307.2 L88.0,306.5 L89.0,305.7 L89.9,305.2 L90.9,304.8 L91.9,304.5 L93.0,304.2 L94.0,304.0 L95.0,303.9 L96.0,303.9 L97.0,303.9 L98.0,303.9 L99.0,304.0 L100.0,304.2 L100.8,304.4 L101.7,304.7 L102.7,305.1 L104.0,305.5 L104.7,305.8 L105.4,306.3 L106.0,306.9 L106.7,307.5 L107.5,308.1 L108.4,308.5 L109.4,308.9 L110.7,309.0 L112.1,308.9 L113.8,308.4 L114.4,308.2 L115.0,307.9 L115.7,307.6 L116.3,307.3 L117.0,307.0 L117.7,306.6 L118.4,306.2 L119.2,305.8 L119.9,305.3 L120.7,304.9 L121.5,304.4 L122.3,303.9 L123.1,303.4 L123.9,302.8 L124.8,302.3 L125.7,301.7 L126.6,301.1 L127.5,300.5 L128.4,299.9 L129.4,299.3 L130.3,298.7 L131.3,298.1 L132.3,297.4 L133.3,296.8 L134.4,296.1 L135.4,295.5 L136.5,294.8 L137.6,294.2 L138.7,293.5 L139.8,292.9 L140.9,292.2 L141.6,291.8 L142.4,291.3 L143.2,290.9 L144.0,290.4 L144.9,289.9 L145.7,289.5 L146.6,289.0 L147.5,288.4 L148.5,287.9 L149.4,287.4 L150.4,286.8 L151.3,286.3 L152.3,285.7 L153.3,285.2 L154.3,284.6 L155.4,284.0 L156.4,283.5 L157.4,282.9 L158.5,282.3 L159.5,281.7 L160.5,281.1 L161.6,280.6 L162.6,280.0 L163.7,279.4 L164.7,278.8 L165.7,278.3 L166.7,277.7 L167.8,277.1 L168.8,276.6 L169.7,276.0 L170.7,275.5 L171.7,275.0 L172.6,274.4 L173.6,273.9 L174.5,273.4 L175.4,272.9 L176.2,272.5 L177.1,272.0 L177.9,271.5 L178.7,271.1 L179.5,270.7 L180.2,270.3 L180.9,269.9 L181.6,269.5 L182.3,269.2 L182.9,268.9 L183.5,268.6 L184.0,268.3 L184.5,268.0 L188.6,266.0 L188.3,266.6 L188.0,267.4 L188.8,267.5 L189.5,267.6 L190.5,267.9 L192.0,268.4 L192.7,268.6 L193.5,268.8 L194.3,269.0 L195.2,269.2 L196.1,269.4 L197.1,269.7 L198.1,270.0 L199.2,270.4 L200.3,270.8 L201.5,271.2 L202.7,271.8 L203.5,272.2 L204.3,272.6 L205.1,273.1 L206.0,273.5 L206.9,274.1 L207.8,274.6 L208.7,275.1 L209.6,275.7 L210.6,276.3 L211.6,276.9 L212.5,277.5 L213.5,278.1 L214.4,278.7 L215.4,279.3 L216.3,279.8 L217.2,280.4 L218.1,281.0 L219.0,281.5 L219.9,282.1 L220.8,282.6 L221.8,283.2 L222.7,283.8 L223.6,284.4 L224.5,285.0 L225.4,285.5 L226.3,286.1 L227.2,286.7 L228.1,287.2 L228.9,287.8 L229.8,288.3 L230.6,288.8 L231.4,289.3 L232.2,289.8 L233.0,290.2 L233.8,290.6 L235.0,291.2 L236.1,291.6 L237.1,292.0 L238.2,292.4 L239.2,292.7 L240.2,293.0 L241.1,293.3 L242.1,293.6 L243.0,293.9 L243.9,294.3 L244.8,294.8 L245.8,295.4 L246.7,295.9 L247.7,296.5 L248.6,297.1 L249.5,297.7 L250.4,298.4 L251.2,299.1 L252.0,299.9 L252.7,300.7 L253.4,301.6 L253.9,302.4 L254.4,303.3 L254.9,304.2 L255.3,305.2 L255.7,306.2 L256.0,307.2 L256.4,308.3 L256.7,309.3 L256.9,310.4 L257.2,311.5 L257.4,312.5 L257.6,313.6 L257.8,314.6 L257.9,315.6 L258.0,316.6 L258.1,317.6 L258.1,318.7 L258.2,319.7 L258.2,320.8 L258.2,321.8 L258.1,322.9 L258.0,323.9 L257.9,324.9 L257.8,325.9 L257.6,326.8 L257.4,327.8 L257.1,328.8 L256.8,329.7 L256.4,330.6 L256.0,331.5 L255.6,332.4 L255.1,333.3 L254.7,334.2 L254.2,335.1 L253.7,336.0 L253.1,336.9 L252.6,337.8 L252.1,338.7 L251.5,339.5 L250.9,340.4 L250.3,341.3 L249.6,342.2 L249.0,343.1 L248.3,344.0 L247.6,344.8 L247.0,345.7 L246.3,346.5 L245.7,347.3 L245.1,348.0 L244.6,348.7 L243.8,349.7 L243.0,350.6 L242.3,351.4 L241.7,352.2 L241.0,352.9 L240.4,353.6 L239.7,354.3 L239.0,355.0 L238.3,355.8 L237.6,356.5 L236.9,357.3 L236.2,358.0 L235.4,358.8 L234.7,359.5 L233.8,360.3 L233.0,361.0 L232.3,361.6 L231.6,362.2 L230.9,362.9 L230.2,363.5 L229.4,364.2 L228.7,364.8 L227.8,365.4 L227.0,366.0 L226.0,366.5 L225.0,367.0 L224.2,367.3 L223.3,367.7 L222.4,368.0 L221.4,368.3 L220.5,368.6 L219.4,368.8 L218.4,369.1 L217.4,369.3 L216.3,369.5 L215.2,369.6 L214.2,369.8 L213.1,369.9 L212.0,370.0 L211.0,370.0 L209.9,370.0 L208.8,369.9 L207.7,369.8 L206.6,369.7 L205.4,369.5 L204.3,369.4 L203.1,369.2 L202.0,369.1 L201.0,369.0 L199.9,368.9 L198.9,368.9 L198.0,368.9 L197.1,369.0 L195.9,369.2 L194.7,369.5 L193.7,369.8 L192.7,370.2 L191.8,370.7 L191.0,371.3 L190.1,372.0 L189.3,372.9 L188.5,374.0 L188.1,374.6 L187.6,375.4 L187.2,376.1 L186.8,376.9 L186.4,377.8 L186.0,378.7 L185.6,379.6 L185.3,380.6 L184.9,381.6 L184.5,382.6 L184.2,383.6 L183.8,384.7 L183.5,385.7 L183.1,386.8 L182.7,387.9 L182.4,388.9 L182.0,390.0 L181.7,390.9 L181.4,391.8 L181.1,392.8 L180.7,393.8 L180.4,394.8 L180.1,395.8 L179.8,396.8 L179.5,397.8 L179.2,398.8 L178.8,399.9 L178.5,400.9 L178.2,402.0 L177.9,403.0 L177.6,404.0 L177.3,405.0 L177.1,406.1 L176.8,407.1 L176.5,408.1 L176.3,409.0 L176.0,410.0 L175.7,411.1 L175.5,412.1 L175.2,413.2 L175.0,414.2 L174.7,415.3 L174.5,416.4 L174.3,417.4 L174.1,418.5 L173.9,419.5 L173.7,420.5 L173.5,421.5 L173.3,422.5 L173.1,423.5 L172.9,424.4 L172.6,425.4 L172.4,426.3 L172.2,427.2 L172.0,428.0 L171.7,429.2 L171.4,430.4 L171.2,431.5 L171.0,432.5 L170.8,433.5 L170.6,434.5 L170.3,435.4 L170.0,436.4 L169.6,437.3 L169.2,438.2 L168.6,439.1 L168.0,440.0 L167.4,440.7 L166.9,441.3 L166.2,442.0 L165.5,442.6 L164.8,443.3 L164.1,443.9 L163.3,444.5 L162.5,445.1 L161.7,445.7 L160.8,446.3 L159.9,446.9 L159.0,447.5 L158.0,448.2 L157.0,448.8 L156.0,449.4 L155.0,450.0 L154.2,450.5 L153.4,450.9 L152.5,451.4 L151.6,451.9 L150.7,452.4 L149.7,452.9 L148.7,453.4 L147.7,453.9 L146.7,454.4 L145.7,454.9 L144.7,455.4 L143.7,455.9 L142.7,456.4 L141.7,456.9 L140.7,457.3 L139.8,457.8 L138.9,458.2 L138.0,458.6 L137.2,459.0 L136.4,459.4 L135.7,459.7 L135.0,460.0 L133.4,460.7 L132.0,461.3 L130.8,461.8 L129.8,462.1 L128.9,462.4 L128.2,462.6 L127.5,462.8 L127.0,463.0" stroke="#3c3c3c" stroke-width="4.4" fill="none" stroke-linejoin="round" stroke-linecap="round"/>
<path d="M82.0,321.0 L82.1,320.4 L82.2,319.5 L82.3,318.5 L82.4,317.4 L82.6,316.2 L82.8,315.1 L83.1,314.0 L83.4,313.0 L83.9,312.0 L84.5,310.9 L85.1,309.9 L85.8,308.9 L86.6,308.0 L87.3,307.2 L88.0,306.5 L89.0,305.7 L89.9,305.2 L90.9,304.8 L91.9,304.5 L93.0,304.2 L94.0,304.0 L95.0,303.9 L96.0,303.9 L97.0,303.9 L98.0,303.9 L99.0,304.0 L100.0,304.2 L100.8,304.4 L101.7,304.7 L102.7,305.1 L104.0,305.5 L104.7,305.8 L105.4,306.3 L106.0,306.9 L106.7,307.5 L107.5,308.1 L108.4,308.5 L109.4,308.9 L110.7,309.0 L112.1,308.9 L113.8,308.4 L114.4,308.2 L115.0,307.9 L115.7,307.6 L116.3,307.3 L117.0,307.0 L117.7,306.6 L118.4,306.2 L119.2,305.8 L119.9,305.3 L120.7,304.9 L121.5,304.4 L122.3,303.9 L123.1,303.4 L123.9,302.8 L124.8,302.3 L125.7,301.7 L126.6,301.1 L127.5,300.5 L128.4,299.9 L129.4,299.3 L130.3,298.7 L131.3,298.1 L132.3,297.4 L133.3,296.8 L134.4,296.1 L135.4,295.5 L136.5,294.8 L137.6,294.2 L138.7,293.5 L139.8,292.9 L140.9,292.2 L141.6,291.8 L142.4,291.3 L143.2,290.9 L144.0,290.4 L144.9,289.9 L145.7,289.5 L146.6,289.0 L147.5,288.4 L148.5,287.9 L149.4,287.4 L150.4,286.8 L151.3,286.3 L152.3,285.7 L153.3,285.2 L154.3,284.6 L155.4,284.0 L156.4,283.5 L157.4,282.9 L158.5,282.3 L159.5,281.7 L160.5,281.1 L161.6,280.6 L162.6,280.0 L163.7,279.4 L164.7,278.8 L165.7,278.3 L166.7,277.7 L167.8,277.1 L168.8,276.6 L169.7,276.0 L170.7,275.5 L171.7,275.0 L172.6,274.4 L173.6,273.9 L174.5,273.4 L175.4,272.9 L176.2,272.5 L177.1,272.0 L177.9,271.5 L178.7,271.1 L179.5,270.7 L180.2,270.3 L180.9,269.9 L181.6,269.5 L182.3,269.2 L182.9,268.9 L183.5,268.6 L184.0,268.3 L184.5,268.0 L188.6,266.0 L188.3,266.6 L188.0,267.4 L188.8,267.5 L189.5,267.6 L190.5,267.9 L192.0,268.4 L192.7,268.6 L193.5,268.8 L194.3,269.0 L195.2,269.2 L196.1,269.4 L197.1,269.7 L198.1,270.0 L199.2,270.4 L200.3,270.8 L201.5,271.2 L202.7,271.8 L203.5,272.2 L204.3,272.6 L205.1,273.1 L206.0,273.5 L206.9,274.1 L207.8,274.6 L208.7,275.1 L209.6,275.7 L210.6,276.3 L211.6,276.9 L212.5,277.5 L213.5,278.1 L214.4,278.7 L215.4,279.3 L216.3,279.8 L217.2,280.4 L218.1,281.0 L219.0,281.5 L219.9,282.1 L220.8,282.6 L221.8,283.2 L222.7,283.8 L223.6,284.4 L224.5,285.0 L225.4,285.5 L226.3,286.1 L227.2,286.7 L228.1,287.2 L228.9,287.8 L229.8,288.3 L230.6,288.8 L231.4,289.3 L232.2,289.8 L233.0,290.2 L233.8,290.6 L235.0,291.2 L236.1,291.6 L237.1,292.0 L238.2,292.4 L239.2,292.7 L240.2,293.0 L241.1,293.3 L242.1,293.6 L243.0,293.9 L243.9,294.3 L244.8,294.8 L245.8,295.4 L246.7,295.9 L247.7,296.5 L248.6,297.1 L249.5,297.7 L250.4,298.4 L251.2,299.1 L252.0,299.9 L252.7,300.7 L253.4,301.6 L253.9,302.4 L254.4,303.3 L254.9,304.2 L255.3,305.2 L255.7,306.2 L256.0,307.2 L256.4,308.3 L256.7,309.3 L256.9,310.4 L257.2,311.5 L257.4,312.5 L257.6,313.6 L257.8,314.6 L257.9,315.6 L258.0,316.6 L258.1,317.6 L258.1,318.7 L258.2,319.7 L258.2,320.8 L258.2,321.8 L258.1,322.9 L258.0,323.9 L257.9,324.9 L257.8,325.9 L257.6,326.8 L257.4,327.8 L257.1,328.8 L256.8,329.7 L256.4,330.6 L256.0,331.5 L255.6,332.4 L255.1,333.3 L254.7,334.2 L254.2,335.1 L253.7,336.0 L253.1,336.9 L252.6,337.8 L252.1,338.7 L251.5,339.5 L250.9,340.4 L250.3,341.3 L249.6,342.2 L249.0,343.1 L248.3,344.0 L247.6,344.8 L247.0,345.7 L246.3,346.5 L245.7,347.3 L245.1,348.0 L244.6,348.7 L243.8,349.7 L243.0,350.6 L242.3,351.4 L241.7,352.2 L241.0,352.9 L240.4,353.6 L239.7,354.3 L239.0,355.0 L238.3,355.8 L237.6,356.5 L236.9,357.3 L236.2,358.0 L235.4,358.8 L234.7,359.5 L233.8,360.3 L233.0,361.0 L232.3,361.6 L231.6,362.2 L230.9,362.9 L230.2,363.5 L229.4,364.2 L228.7,364.8 L227.8,365.4 L227.0,366.0 L226.0,366.5 L225.0,367.0 L224.2,367.3 L223.3,367.7 L222.4,368.0 L221.4,368.3 L220.5,368.6 L219.4,368.8 L218.4,369.1 L217.4,369.3 L216.3,369.5 L215.2,369.6 L214.2,369.8 L213.1,369.9 L212.0,370.0 L211.0,370.0 L209.9,370.0 L208.8,369.9 L207.7,369.8 L206.6,369.7 L205.4,369.5 L204.3,369.4 L203.1,369.2 L202.0,369.1 L201.0,369.0 L199.9,368.9 L198.9,368.9 L198.0,368.9 L197.1,369.0 L195.9,369.2 L194.7,369.5 L193.7,369.8 L192.7,370.2 L191.8,370.7 L191.0,371.3 L190.1,372.0 L189.3,372.9 L188.5,374.0 L188.1,374.6 L187.6,375.4 L187.2,376.1 L186.8,376.9 L186.4,377.8 L186.0,378.7 L185.6,379.6 L185.3,380.6 L184.9,381.6 L184.5,382.6 L184.2,383.6 L183.8,384.7 L183.5,385.7 L183.1,386.8 L182.7,387.9 L182.4,388.9 L182.0,390.0 L181.7,390.9 L181.4,391.8 L181.1,392.8 L180.7,393.8 L180.4,394.8 L180.1,395.8 L179.8,396.8 L179.5,397.8 L179.2,398.8 L178.8,399.9 L178.5,400.9 L178.2,402.0 L177.9,403.0 L177.6,404.0 L177.3,405.0 L177.1,406.1 L176.8,407.1 L176.5,408.1 L176.3,409.0 L176.0,410.0 L175.7,411.1 L175.5,412.1 L175.2,413.2 L175.0,414.2 L174.7,415.3 L174.5,416.4 L174.3,417.4 L174.1,418.5 L173.9,419.5 L173.7,420.5 L173.5,421.5 L173.3,422.5 L173.1,423.5 L172.9,424.4 L172.6,425.4 L172.4,426.3 L172.2,427.2 L172.0,428.0 L171.7,429.2 L171.4,430.4 L171.2,431.5 L171.0,432.5 L170.8,433.5 L170.6,434.5 L170.3,435.4 L170.0,436.4 L169.6,437.3 L169.2,438.2 L168.6,439.1 L168.0,440.0 L167.4,440.7 L166.9,441.3 L166.2,442.0 L165.5,442.6 L164.8,443.3 L164.1,443.9 L163.3,444.5 L162.5,445.1 L161.7,445.7 L160.8,446.3 L159.9,446.9 L159.0,447.5 L158.0,448.2 L157.0,448.8 L156.0,449.4 L155.0,450.0 L154.2,450.5 L153.4,450.9 L152.5,451.4 L151.6,451.9 L150.7,452.4 L149.7,452.9 L148.7,453.4 L147.7,453.9 L146.7,454.4 L145.7,454.9 L144.7,455.4 L143.7,455.9 L142.7,456.4 L141.7,456.9 L140.7,457.3 L139.8,457.8 L138.9,458.2 L138.0,458.6 L137.2,459.0 L136.4,459.4 L135.7,459.7 L135.0,460.0 L133.4,460.7 L132.0,461.3 L130.8,461.8 L129.8,462.1 L128.9,462.4 L128.2,462.6 L127.5,462.8 L127.0,463.0" stroke="#fff" stroke-width="2.7" fill="none" stroke-linejoin="round" stroke-linecap="round"/>
<path d="M28.0,354.0 L28.2,353.3 L28.4,352.4 L28.7,351.3 L29.1,350.1 L29.4,349.0 L29.7,348.0 L29.9,347.0 L30.2,346.0 L30.6,345.0 L31.0,344.0 L31.5,343.0 L32.1,342.1 L32.7,341.2 L33.4,340.4 L34.2,339.6 L35.2,338.8 L36.3,338.0 L36.9,337.6 L37.4,337.1 L37.8,336.7 L38.2,336.3 L38.7,335.9 L39.4,335.5 L40.4,335.1 L41.8,334.7 L43.6,334.3 L46.0,333.8 L46.6,333.7 L47.3,333.6 L48.1,333.5 L48.8,333.4 L49.7,333.2 L50.5,333.1 L51.4,333.0 L52.4,332.9 L53.3,332.8 L54.3,332.7 L55.4,332.5 L56.4,332.4 L57.5,332.3 L58.6,332.2 L59.7,332.1 L60.8,331.9 L62.0,331.8 L63.2,331.7 L64.3,331.6 L65.5,331.5 L66.7,331.3 L67.9,331.2 L69.1,331.1 L70.3,331.0 L71.5,330.8 L72.7,330.7 L73.8,330.6 L75.0,330.4 L76.1,330.3 L77.3,330.2 L78.4,330.1 L79.5,329.9 L80.6,329.8 L81.6,329.7 L82.6,329.5 L83.6,329.4 L84.6,329.3 L85.5,329.1 L86.4,329.0 L87.3,328.8 L88.1,328.7 L88.9,328.6 L89.6,328.4 L90.3,328.3 L92.1,327.9 L93.5,327.6 L94.6,327.3 L95.5,327.0 L96.3,326.8 L96.9,326.5 L97.4,326.2 L97.8,325.9 L98.3,325.5 L98.8,325.1 L99.5,324.6 L100.3,324.0 L101.2,323.3 L102.5,322.5 L104.0,321.6 L104.6,321.2 L105.2,320.9 L105.9,320.5 L106.5,320.1 L107.2,319.7 L107.9,319.2 L108.6,318.8 L109.4,318.3 L110.1,317.8 L110.9,317.3 L111.7,316.8 L112.5,316.3 L113.3,315.8 L114.1,315.3 L114.9,314.7 L115.8,314.2 L116.7,313.6 L117.5,313.1 L118.4,312.5 L119.3,311.9 L120.2,311.3 L121.1,310.8 L122.0,310.2 L123.0,309.6 L123.9,309.0 L124.8,308.4 L125.8,307.8 L126.7,307.2 L127.6,306.6 L128.6,306.0 L129.6,305.4 L130.5,304.8 L131.5,304.2 L132.4,303.6 L133.4,303.0 L134.3,302.5 L135.3,301.9 L136.2,301.3 L137.2,300.8 L138.1,300.2 L139.0,299.7 L140.0,299.1 L140.9,298.6 L141.8,298.1 L142.6,297.6 L143.5,297.1 L144.4,296.6 L145.4,296.1 L146.3,295.6 L147.3,295.1 L148.3,294.6 L149.2,294.0 L150.2,293.5 L151.3,293.0 L152.3,292.4 L153.3,291.9 L154.3,291.4 L155.4,290.8 L156.4,290.3 L157.4,289.7 L158.5,289.2 L159.5,288.7 L160.6,288.1 L161.6,287.6 L162.6,287.1 L163.7,286.6 L164.7,286.1 L165.7,285.5 L166.7,285.0 L167.7,284.5 L168.7,284.0 L169.6,283.6 L170.6,283.1 L171.5,282.6 L172.4,282.2 L173.3,281.7 L174.2,281.3 L175.1,280.9 L175.9,280.4 L176.7,280.0 L177.5,279.6 L178.3,279.3 L179.0,278.9 L179.7,278.6 L180.4,278.2 L181.1,277.9 L181.7,277.6 L182.2,277.3 L182.8,277.0 L183.3,276.8 L187.4,274.9 L187.2,275.4 L187.0,276.0 L187.8,276.1 L188.5,276.2 L189.5,276.5 L191.0,277.0 L191.7,277.2 L192.5,277.4 L193.3,277.6 L194.3,277.9 L195.2,278.2 L196.3,278.4 L197.3,278.7 L198.4,279.1 L199.5,279.4 L200.6,279.7 L201.6,280.1 L202.7,280.5 L203.6,280.9 L204.5,281.2 L205.4,281.6 L206.4,282.0 L207.3,282.4 L208.3,282.9 L209.3,283.3 L210.2,283.8 L211.2,284.2 L212.2,284.7 L213.1,285.1 L214.1,285.6 L215.1,286.1 L216.0,286.5 L216.9,287.0 L217.9,287.4 L218.8,287.9 L219.8,288.4 L220.7,288.9 L221.7,289.4 L222.6,289.9 L223.6,290.4 L224.5,290.8 L225.4,291.3 L226.4,291.8 L227.3,292.2 L228.1,292.6 L229.0,293.0 L230.1,293.5 L231.1,293.9 L232.2,294.2 L233.2,294.6 L234.2,294.9 L235.2,295.2 L236.2,295.5 L237.2,295.8 L238.1,296.2 L239.1,296.6 L240.0,297.0 L241.0,297.5 L242.0,298.0 L243.0,298.5 L244.0,299.0 L244.9,299.6 L245.8,300.1 L246.7,300.8 L247.5,301.4 L248.3,302.2 L249.0,303.0 L249.6,303.8 L250.2,304.7 L250.7,305.6 L251.2,306.6 L251.6,307.6 L252.0,308.7 L252.4,309.7 L252.7,310.8 L253.0,311.9 L253.3,312.9 L253.5,314.0 L253.7,315.0 L253.8,316.0 L253.9,317.0 L254.0,318.0 L254.1,319.0 L254.1,320.0 L254.1,321.1 L254.0,322.1 L254.0,323.1 L253.8,324.1 L253.7,325.0 L253.5,326.0 L253.2,327.0 L252.9,328.0 L252.6,329.0 L252.1,329.9 L251.7,330.9 L251.2,331.8 L250.7,332.8 L250.1,333.7 L249.6,334.6 L249.0,335.6 L248.5,336.5 L248.0,337.4 L247.4,338.2 L246.9,339.1 L246.3,340.0 L245.6,340.9 L245.0,341.8 L244.4,342.6 L243.8,343.5 L243.2,344.3 L242.6,345.1 L242.0,345.8 L241.5,346.5 L240.7,347.4 L240.0,348.3 L239.3,349.1 L238.7,349.8 L238.0,350.5 L237.4,351.1 L236.7,351.8 L236.0,352.5 L235.3,353.2 L234.6,354.0 L233.9,354.7 L233.2,355.4 L232.4,356.1 L231.7,356.8 L230.8,357.4 L230.0,358.0 L229.1,358.6 L228.2,359.1 L227.3,359.6 L226.4,360.1 L225.4,360.5 L224.3,360.9 L223.2,361.2 L222.0,361.5 L221.1,361.6 L220.3,361.7 L219.3,361.8 L218.4,361.8 L217.4,361.8 L216.4,361.8 L215.4,361.7 L214.4,361.7 L213.3,361.7 L212.2,361.6 L211.1,361.5 L210.0,361.5 L209.0,361.4 L208.0,361.4 L206.9,361.3 L205.8,361.2 L204.7,361.0 L203.5,360.9 L202.4,360.8 L201.3,360.7 L200.1,360.6 L199.1,360.5 L198.0,360.4 L197.0,360.4 L196.1,360.4 L195.2,360.5 L193.9,360.7 L192.8,360.9 L191.7,361.2 L190.7,361.5 L189.8,361.9 L188.9,362.4 L188.1,362.9 L187.3,363.4 L186.6,364.0 L185.9,364.7 L185.4,365.3 L185.0,365.9 L184.6,366.7 L184.3,367.5 L183.9,368.6 L183.4,369.8 L182.8,371.4 L182.5,372.1 L182.2,372.8 L181.9,373.7 L181.6,374.5 L181.2,375.4 L180.9,376.4 L180.5,377.4 L180.1,378.4 L179.8,379.4 L179.4,380.5 L179.0,381.6 L178.6,382.6 L178.2,383.7 L177.8,384.8 L177.4,385.8 L177.0,386.8 L176.6,387.8 L176.3,388.8 L175.9,389.7 L175.5,390.6 L175.2,391.4 L174.7,392.6 L174.2,393.7 L173.7,394.8 L173.2,395.8 L172.7,396.8 L172.2,397.8 L171.8,398.7 L171.3,399.6 L170.8,400.5 L170.4,401.4 L169.9,402.2 L169.4,403.0 L169.0,403.9 L168.5,404.7 L168.0,405.7 L167.5,406.7 L167.0,407.6 L166.6,408.5 L166.2,409.4 L165.8,410.2 L165.3,411.0 L164.7,411.9 L164.0,412.7 L163.2,413.6 L162.3,414.5 L161.7,415.0 L161.0,415.6 L160.2,416.1 L159.4,416.7 L158.5,417.3 L157.6,417.8 L156.6,418.4 L155.7,419.0 L154.7,419.6 L153.7,420.1 L152.7,420.7 L151.8,421.3 L150.8,421.8 L149.9,422.4 L149.0,422.9 L148.2,423.5 L147.4,424.0 L146.7,424.5 L146.0,425.0 L144.9,425.9 L143.9,426.7 L142.9,427.5 L142.1,428.3 L141.4,429.0 L140.7,429.8 L140.1,430.5 L139.7,431.3 L139.3,432.1 L139.0,433.0 L138.8,433.9 L138.7,434.9 L138.7,435.9 L138.8,437.0 L139.0,438.1 L139.3,439.1 L139.6,440.2 L140.0,441.2 L140.5,442.1 L141.0,443.0 L141.5,443.7 L142.1,444.5 L142.8,445.1 L143.6,445.8 L144.4,446.4 L145.2,447.0 L146.1,447.6 L147.0,448.2 L147.9,448.7 L148.9,449.4 L149.8,450.0 L150.6,450.5 L151.4,451.0 L152.3,451.5 L153.2,452.0 L154.2,452.5 L155.1,453.0 L156.1,453.5 L157.1,454.0 L158.0,454.5 L158.9,455.1 L159.7,455.6 L160.5,456.1 L161.2,456.7 L161.8,457.3 L162.6,458.2 L163.2,459.1 L163.8,460.0 L164.3,461.0 L164.7,462.0 L165.1,463.0 L165.4,463.9 L165.5,464.9 L165.7,465.8 L165.7,466.7 L165.6,467.8 L165.4,468.8 L165.1,469.8 L164.6,470.8 L164.0,471.7 L163.4,472.7 L162.6,473.5 L161.8,474.4 L161.1,475.0 L160.2,475.6 L159.3,476.2 L158.3,476.8 L157.2,477.4 L156.1,478.0 L155.1,478.5 L154.1,478.9 L153.3,479.4 L152.5,479.7 L152.0,480.0" stroke="#3c3c3c" stroke-width="4.4" fill="none" stroke-linejoin="round" stroke-linecap="round"/>
<path d="M28.0,354.0 L28.2,353.3 L28.4,352.4 L28.7,351.3 L29.1,350.1 L29.4,349.0 L29.7,348.0 L29.9,347.0 L30.2,346.0 L30.6,345.0 L31.0,344.0 L31.5,343.0 L32.1,342.1 L32.7,341.2 L33.4,340.4 L34.2,339.6 L35.2,338.8 L36.3,338.0 L36.9,337.6 L37.4,337.1 L37.8,336.7 L38.2,336.3 L38.7,335.9 L39.4,335.5 L40.4,335.1 L41.8,334.7 L43.6,334.3 L46.0,333.8 L46.6,333.7 L47.3,333.6 L48.1,333.5 L48.8,333.4 L49.7,333.2 L50.5,333.1 L51.4,333.0 L52.4,332.9 L53.3,332.8 L54.3,332.7 L55.4,332.5 L56.4,332.4 L57.5,332.3 L58.6,332.2 L59.7,332.1 L60.8,331.9 L62.0,331.8 L63.2,331.7 L64.3,331.6 L65.5,331.5 L66.7,331.3 L67.9,331.2 L69.1,331.1 L70.3,331.0 L71.5,330.8 L72.7,330.7 L73.8,330.6 L75.0,330.4 L76.1,330.3 L77.3,330.2 L78.4,330.1 L79.5,329.9 L80.6,329.8 L81.6,329.7 L82.6,329.5 L83.6,329.4 L84.6,329.3 L85.5,329.1 L86.4,329.0 L87.3,328.8 L88.1,328.7 L88.9,328.6 L89.6,328.4 L90.3,328.3 L92.1,327.9 L93.5,327.6 L94.6,327.3 L95.5,327.0 L96.3,326.8 L96.9,326.5 L97.4,326.2 L97.8,325.9 L98.3,325.5 L98.8,325.1 L99.5,324.6 L100.3,324.0 L101.2,323.3 L102.5,322.5 L104.0,321.6 L104.6,321.2 L105.2,320.9 L105.9,320.5 L106.5,320.1 L107.2,319.7 L107.9,319.2 L108.6,318.8 L109.4,318.3 L110.1,317.8 L110.9,317.3 L111.7,316.8 L112.5,316.3 L113.3,315.8 L114.1,315.3 L114.9,314.7 L115.8,314.2 L116.7,313.6 L117.5,313.1 L118.4,312.5 L119.3,311.9 L120.2,311.3 L121.1,310.8 L122.0,310.2 L123.0,309.6 L123.9,309.0 L124.8,308.4 L125.8,307.8 L126.7,307.2 L127.6,306.6 L128.6,306.0 L129.6,305.4 L130.5,304.8 L131.5,304.2 L132.4,303.6 L133.4,303.0 L134.3,302.5 L135.3,301.9 L136.2,301.3 L137.2,300.8 L138.1,300.2 L139.0,299.7 L140.0,299.1 L140.9,298.6 L141.8,298.1 L142.6,297.6 L143.5,297.1 L144.4,296.6 L145.4,296.1 L146.3,295.6 L147.3,295.1 L148.3,294.6 L149.2,294.0 L150.2,293.5 L151.3,293.0 L152.3,292.4 L153.3,291.9 L154.3,291.4 L155.4,290.8 L156.4,290.3 L157.4,289.7 L158.5,289.2 L159.5,288.7 L160.6,288.1 L161.6,287.6 L162.6,287.1 L163.7,286.6 L164.7,286.1 L165.7,285.5 L166.7,285.0 L167.7,284.5 L168.7,284.0 L169.6,283.6 L170.6,283.1 L171.5,282.6 L172.4,282.2 L173.3,281.7 L174.2,281.3 L175.1,280.9 L175.9,280.4 L176.7,280.0 L177.5,279.6 L178.3,279.3 L179.0,278.9 L179.7,278.6 L180.4,278.2 L181.1,277.9 L181.7,277.6 L182.2,277.3 L182.8,277.0 L183.3,276.8 L187.4,274.9 L187.2,275.4 L187.0,276.0 L187.8,276.1 L188.5,276.2 L189.5,276.5 L191.0,277.0 L191.7,277.2 L192.5,277.4 L193.3,277.6 L194.3,277.9 L195.2,278.2 L196.3,278.4 L197.3,278.7 L198.4,279.1 L199.5,279.4 L200.6,279.7 L201.6,280.1 L202.7,280.5 L203.6,280.9 L204.5,281.2 L205.4,281.6 L206.4,282.0 L207.3,282.4 L208.3,282.9 L209.3,283.3 L210.2,283.8 L211.2,284.2 L212.2,284.7 L213.1,285.1 L214.1,285.6 L215.1,286.1 L216.0,286.5 L216.9,287.0 L217.9,287.4 L218.8,287.9 L219.8,288.4 L220.7,288.9 L221.7,289.4 L222.6,289.9 L223.6,290.4 L224.5,290.8 L225.4,291.3 L226.4,291.8 L227.3,292.2 L228.1,292.6 L229.0,293.0 L230.1,293.5 L231.1,293.9 L232.2,294.2 L233.2,294.6 L234.2,294.9 L235.2,295.2 L236.2,295.5 L237.2,295.8 L238.1,296.2 L239.1,296.6 L240.0,297.0 L241.0,297.5 L242.0,298.0 L243.0,298.5 L244.0,299.0 L244.9,299.6 L245.8,300.1 L246.7,300.8 L247.5,301.4 L248.3,302.2 L249.0,303.0 L249.6,303.8 L250.2,304.7 L250.7,305.6 L251.2,306.6 L251.6,307.6 L252.0,308.7 L252.4,309.7 L252.7,310.8 L253.0,311.9 L253.3,312.9 L253.5,314.0 L253.7,315.0 L253.8,316.0 L253.9,317.0 L254.0,318.0 L254.1,319.0 L254.1,320.0 L254.1,321.1 L254.0,322.1 L254.0,323.1 L253.8,324.1 L253.7,325.0 L253.5,326.0 L253.2,327.0 L252.9,328.0 L252.6,329.0 L252.1,329.9 L251.7,330.9 L251.2,331.8 L250.7,332.8 L250.1,333.7 L249.6,334.6 L249.0,335.6 L248.5,336.5 L248.0,337.4 L247.4,338.2 L246.9,339.1 L246.3,340.0 L245.6,340.9 L245.0,341.8 L244.4,342.6 L243.8,343.5 L243.2,344.3 L242.6,345.1 L242.0,345.8 L241.5,346.5 L240.7,347.4 L240.0,348.3 L239.3,349.1 L238.7,349.8 L238.0,350.5 L237.4,351.1 L236.7,351.8 L236.0,352.5 L235.3,353.2 L234.6,354.0 L233.9,354.7 L233.2,355.4 L232.4,356.1 L231.7,356.8 L230.8,357.4 L230.0,358.0 L229.1,358.6 L228.2,359.1 L227.3,359.6 L226.4,360.1 L225.4,360.5 L224.3,360.9 L223.2,361.2 L222.0,361.5 L221.1,361.6 L220.3,361.7 L219.3,361.8 L218.4,361.8 L217.4,361.8 L216.4,361.8 L215.4,361.7 L214.4,361.7 L213.3,361.7 L212.2,361.6 L211.1,361.5 L210.0,361.5 L209.0,361.4 L208.0,361.4 L206.9,361.3 L205.8,361.2 L204.7,361.0 L203.5,360.9 L202.4,360.8 L201.3,360.7 L200.1,360.6 L199.1,360.5 L198.0,360.4 L197.0,360.4 L196.1,360.4 L195.2,360.5 L193.9,360.7 L192.8,360.9 L191.7,361.2 L190.7,361.5 L189.8,361.9 L188.9,362.4 L188.1,362.9 L187.3,363.4 L186.6,364.0 L185.9,364.7 L185.4,365.3 L185.0,365.9 L184.6,366.7 L184.3,367.5 L183.9,368.6 L183.4,369.8 L182.8,371.4 L182.5,372.1 L182.2,372.8 L181.9,373.7 L181.6,374.5 L181.2,375.4 L180.9,376.4 L180.5,377.4 L180.1,378.4 L179.8,379.4 L179.4,380.5 L179.0,381.6 L178.6,382.6 L178.2,383.7 L177.8,384.8 L177.4,385.8 L177.0,386.8 L176.6,387.8 L176.3,388.8 L175.9,389.7 L175.5,390.6 L175.2,391.4 L174.7,392.6 L174.2,393.7 L173.7,394.8 L173.2,395.8 L172.7,396.8 L172.2,397.8 L171.8,398.7 L171.3,399.6 L170.8,400.5 L170.4,401.4 L169.9,402.2 L169.4,403.0 L169.0,403.9 L168.5,404.7 L168.0,405.7 L167.5,406.7 L167.0,407.6 L166.6,408.5 L166.2,409.4 L165.8,410.2 L165.3,411.0 L164.7,411.9 L164.0,412.7 L163.2,413.6 L162.3,414.5 L161.7,415.0 L161.0,415.6 L160.2,416.1 L159.4,416.7 L158.5,417.3 L157.6,417.8 L156.6,418.4 L155.7,419.0 L154.7,419.6 L153.7,420.1 L152.7,420.7 L151.8,421.3 L150.8,421.8 L149.9,422.4 L149.0,422.9 L148.2,423.5 L147.4,424.0 L146.7,424.5 L146.0,425.0 L144.9,425.9 L143.9,426.7 L142.9,427.5 L142.1,428.3 L141.4,429.0 L140.7,429.8 L140.1,430.5 L139.7,431.3 L139.3,432.1 L139.0,433.0 L138.8,433.9 L138.7,434.9 L138.7,435.9 L138.8,437.0 L139.0,438.1 L139.3,439.1 L139.6,440.2 L140.0,441.2 L140.5,442.1 L141.0,443.0 L141.5,443.7 L142.1,444.5 L142.8,445.1 L143.6,445.8 L144.4,446.4 L145.2,447.0 L146.1,447.6 L147.0,448.2 L147.9,448.7 L148.9,449.4 L149.8,450.0 L150.6,450.5 L151.4,451.0 L152.3,451.5 L153.2,452.0 L154.2,452.5 L155.1,453.0 L156.1,453.5 L157.1,454.0 L158.0,454.5 L158.9,455.1 L159.7,455.6 L160.5,456.1 L161.2,456.7 L161.8,457.3 L162.6,458.2 L163.2,459.1 L163.8,460.0 L164.3,461.0 L164.7,462.0 L165.1,463.0 L165.4,463.9 L165.5,464.9 L165.7,465.8 L165.7,466.7 L165.6,467.8 L165.4,468.8 L165.1,469.8 L164.6,470.8 L164.0,471.7 L163.4,472.7 L162.6,473.5 L161.8,474.4 L161.1,475.0 L160.2,475.6 L159.3,476.2 L158.3,476.8 L157.2,477.4 L156.1,478.0 L155.1,478.5 L154.1,478.9 L153.3,479.4 L152.5,479.7 L152.0,480.0" stroke="#fff" stroke-width="2.7" fill="none" stroke-linejoin="round" stroke-linecap="round"/>
<path d="M136.2,460.8 L133.1,466.3 L126.8,466.3 L123.6,460.8 L126.8,455.3 L133.1,455.3Z" fill="#fff" stroke="#3c3c3c" stroke-width="0.9" stroke-linejoin="round"/>
<path d="M132.8,463.6 L136.2,460.8 L133.1,466.3 L129.7,469.1Z" fill="#fff" stroke="#3c3c3c" stroke-width="0.9" stroke-linejoin="round"/>
<path d="M129.7,469.1 L133.1,466.3 L126.8,466.3 L123.3,469.1Z" fill="#fff" stroke="#3c3c3c" stroke-width="0.9" stroke-linejoin="round"/>
<path d="M123.3,469.1 L126.8,466.3 L123.6,460.8 L120.2,463.6Z" fill="#fff" stroke="#3c3c3c" stroke-width="0.9" stroke-linejoin="round"/>
<path d="M120.2,463.6 L123.6,460.8 L126.8,455.3 L123.3,458.1Z" fill="#fff" stroke="#3c3c3c" stroke-width="0.9" stroke-linejoin="round"/>
<path d="M123.3,458.1 L126.8,455.3 L133.1,455.3 L129.7,458.1Z" fill="#fff" stroke="#3c3c3c" stroke-width="0.9" stroke-linejoin="round"/>
<path d="M129.7,458.1 L133.1,455.3 L136.2,460.8 L132.8,463.6Z" fill="#fff" stroke="#3c3c3c" stroke-width="0.9" stroke-linejoin="round"/>
<path d="M132.8,463.6 L129.7,469.1 L123.3,469.1 L120.2,463.6 L123.3,458.1 L129.7,458.1Z" fill="#fff" stroke="#3c3c3c" stroke-width="1" stroke-linejoin="round"/>
<circle cx="126.5" cy="463.6" r="3.3" fill="none" stroke="#444" stroke-width="0.8"/>
<circle cx="127.0" cy="463.3" r="1.9" fill="none" stroke="#777" stroke-width="0.6"/>
<path d="M129.1,470.0 L126.0,475.5 L119.7,475.5 L116.5,470.0 L119.7,464.5 L126.0,464.5Z" fill="#fff" stroke="#3c3c3c" stroke-width="0.9" stroke-linejoin="round"/>
<path d="M125.7,472.8 L129.1,470.0 L126.0,475.5 L122.6,478.3Z" fill="#fff" stroke="#3c3c3c" stroke-width="0.9" stroke-linejoin="round"/>
<path d="M122.6,478.3 L126.0,475.5 L119.7,475.5 L116.2,478.3Z" fill="#fff" stroke="#3c3c3c" stroke-width="0.9" stroke-linejoin="round"/>
<path d="M116.2,478.3 L119.7,475.5 L116.5,470.0 L113.1,472.8Z" fill="#fff" stroke="#3c3c3c" stroke-width="0.9" stroke-linejoin="round"/>
<path d="M113.1,472.8 L116.5,470.0 L119.7,464.5 L116.2,467.3Z" fill="#fff" stroke="#3c3c3c" stroke-width="0.9" stroke-linejoin="round"/>
<path d="M116.2,467.3 L119.7,464.5 L126.0,464.5 L122.6,467.3Z" fill="#fff" stroke="#3c3c3c" stroke-width="0.9" stroke-linejoin="round"/>
<path d="M122.6,467.3 L126.0,464.5 L129.1,470.0 L125.7,472.8Z" fill="#fff" stroke="#3c3c3c" stroke-width="0.9" stroke-linejoin="round"/>
<path d="M125.7,472.8 L122.6,478.3 L116.2,478.3 L113.1,472.8 L116.2,467.3 L122.6,467.3Z" fill="#fff" stroke="#3c3c3c" stroke-width="1" stroke-linejoin="round"/>
<circle cx="119.4" cy="472.8" r="3.3" fill="none" stroke="#444" stroke-width="0.8"/>
<circle cx="119.9" cy="472.5" r="1.9" fill="none" stroke="#777" stroke-width="0.6"/>
<path d="M133.5,485.2 L130.3,490.7 L124.1,490.7 L120.9,485.2 L124.0,479.7 L130.3,479.7Z" fill="#fff" stroke="#3c3c3c" stroke-width="0.9" stroke-linejoin="round"/>
<path d="M130.1,488.0 L133.5,485.2 L130.3,490.7 L127.0,493.5Z" fill="#fff" stroke="#3c3c3c" stroke-width="0.9" stroke-linejoin="round"/>
<path d="M127.0,493.5 L130.3,490.7 L124.1,490.7 L120.7,493.5Z" fill="#fff" stroke="#3c3c3c" stroke-width="0.9" stroke-linejoin="round"/>
<path d="M120.7,493.5 L124.1,490.7 L120.9,485.2 L117.5,488.0Z" fill="#fff" stroke="#3c3c3c" stroke-width="0.9" stroke-linejoin="round"/>
<path d="M117.5,488.0 L120.9,485.2 L124.0,479.7 L120.6,482.5Z" fill="#fff" stroke="#3c3c3c" stroke-width="0.9" stroke-linejoin="round"/>
<path d="M120.6,482.5 L124.0,479.7 L130.3,479.7 L127.0,482.5Z" fill="#fff" stroke="#3c3c3c" stroke-width="0.9" stroke-linejoin="round"/>
<path d="M127.0,482.5 L130.3,479.7 L133.5,485.2 L130.1,488.0Z" fill="#fff" stroke="#3c3c3c" stroke-width="0.9" stroke-linejoin="round"/>
<path d="M130.1,488.0 L127.0,493.5 L120.7,493.5 L117.5,488.0 L120.6,482.5 L127.0,482.5Z" fill="#fff" stroke="#3c3c3c" stroke-width="1" stroke-linejoin="round"/>
<circle cx="123.8" cy="488.0" r="3.3" fill="none" stroke="#444" stroke-width="0.8"/>
<circle cx="124.3" cy="487.7" r="1.9" fill="none" stroke="#777" stroke-width="0.6"/>
<path d="M158.2,477.8 L155.1,483.3 L148.8,483.3 L145.6,477.8 L148.8,472.3 L155.1,472.3Z" fill="#fff" stroke="#3c3c3c" stroke-width="0.9" stroke-linejoin="round"/>
<path d="M154.8,480.6 L158.2,477.8 L155.1,483.3 L151.7,486.1Z" fill="#fff" stroke="#3c3c3c" stroke-width="0.9" stroke-linejoin="round"/>
<path d="M151.7,486.1 L155.1,483.3 L148.8,483.3 L145.3,486.1Z" fill="#fff" stroke="#3c3c3c" stroke-width="0.9" stroke-linejoin="round"/>
<path d="M145.3,486.1 L148.8,483.3 L145.6,477.8 L142.2,480.6Z" fill="#fff" stroke="#3c3c3c" stroke-width="0.9" stroke-linejoin="round"/>
<path d="M142.2,480.6 L145.6,477.8 L148.8,472.3 L145.3,475.1Z" fill="#fff" stroke="#3c3c3c" stroke-width="0.9" stroke-linejoin="round"/>
<path d="M145.3,475.1 L148.8,472.3 L155.1,472.3 L151.7,475.1Z" fill="#fff" stroke="#3c3c3c" stroke-width="0.9" stroke-linejoin="round"/>
<path d="M151.7,475.1 L155.1,472.3 L158.2,477.8 L154.8,480.6Z" fill="#fff" stroke="#3c3c3c" stroke-width="0.9" stroke-linejoin="round"/>
<path d="M154.8,480.6 L151.7,486.1 L145.3,486.1 L142.2,480.6 L145.3,475.1 L151.7,475.1Z" fill="#fff" stroke="#3c3c3c" stroke-width="1" stroke-linejoin="round"/>
<circle cx="148.5" cy="480.6" r="3.3" fill="none" stroke="#444" stroke-width="0.8"/>
<circle cx="149.0" cy="480.3" r="1.9" fill="none" stroke="#777" stroke-width="0.6"/>
<path d="M162.1,493.6 L159.0,499.1 L152.7,499.1 L149.5,493.6 L152.7,488.1 L159.0,488.1Z" fill="#fff" stroke="#3c3c3c" stroke-width="0.9" stroke-linejoin="round"/>
<path d="M158.7,496.4 L162.1,493.6 L159.0,499.1 L155.6,501.9Z" fill="#fff" stroke="#3c3c3c" stroke-width="0.9" stroke-linejoin="round"/>
<path d="M155.6,501.9 L159.0,499.1 L152.7,499.1 L149.2,501.9Z" fill="#fff" stroke="#3c3c3c" stroke-width="0.9" stroke-linejoin="round"/>
<path d="M149.2,501.9 L152.7,499.1 L149.5,493.6 L146.1,496.4Z" fill="#fff" stroke="#3c3c3c" stroke-width="0.9" stroke-linejoin="round"/>
<path d="M146.1,496.4 L149.5,493.6 L152.7,488.1 L149.2,490.9Z" fill="#fff" stroke="#3c3c3c" stroke-width="0.9" stroke-linejoin="round"/>
<path d="M149.2,490.9 L152.7,488.1 L159.0,488.1 L155.6,490.9Z" fill="#fff" stroke="#3c3c3c" stroke-width="0.9" stroke-linejoin="round"/>
<path d="M155.6,490.9 L159.0,488.1 L162.1,493.6 L158.7,496.4Z" fill="#fff" stroke="#3c3c3c" stroke-width="0.9" stroke-linejoin="round"/>
<path d="M158.7,496.4 L155.6,501.9 L149.2,501.9 L146.1,496.4 L149.2,490.9 L155.6,490.9Z" fill="#fff" stroke="#3c3c3c" stroke-width="1" stroke-linejoin="round"/>
<circle cx="152.4" cy="496.4" r="3.3" fill="none" stroke="#444" stroke-width="0.8"/>
<circle cx="152.9" cy="496.1" r="1.9" fill="none" stroke="#777" stroke-width="0.6"/>
<path d="M155.2,502.5 L152.1,508.0 L145.8,508.0 L142.6,502.5 L145.8,497.0 L152.1,497.0Z" fill="#fff" stroke="#3c3c3c" stroke-width="0.9" stroke-linejoin="round"/>
<path d="M151.8,505.3 L155.2,502.5 L152.1,508.0 L148.7,510.8Z" fill="#fff" stroke="#3c3c3c" stroke-width="0.9" stroke-linejoin="round"/>
<path d="M148.7,510.8 L152.1,508.0 L145.8,508.0 L142.3,510.8Z" fill="#fff" stroke="#3c3c3c" stroke-width="0.9" stroke-linejoin="round"/>
<path d="M142.3,510.8 L145.8,508.0 L142.6,502.5 L139.2,505.3Z" fill="#fff" stroke="#3c3c3c" stroke-width="0.9" stroke-linejoin="round"/>
<path d="M139.2,505.3 L142.6,502.5 L145.8,497.0 L142.3,499.8Z" fill="#fff" stroke="#3c3c3c" stroke-width="0.9" stroke-linejoin="round"/>
<path d="M142.3,499.8 L145.8,497.0 L152.1,497.0 L148.7,499.8Z" fill="#fff" stroke="#3c3c3c" stroke-width="0.9" stroke-linejoin="round"/>
<path d="M148.7,499.8 L152.1,497.0 L155.2,502.5 L151.8,505.3Z" fill="#fff" stroke="#3c3c3c" stroke-width="0.9" stroke-linejoin="round"/>
<path d="M151.8,505.3 L148.7,510.8 L142.3,510.8 L139.2,505.3 L142.3,499.8 L148.7,499.8Z" fill="#fff" stroke="#3c3c3c" stroke-width="1" stroke-linejoin="round"/>
<circle cx="145.5" cy="505.3" r="3.3" fill="none" stroke="#444" stroke-width="0.8"/>
<circle cx="146.0" cy="505.0" r="1.9" fill="none" stroke="#777" stroke-width="0.6"/>
<path d="M129,292 Q128.5,287.5 132,286.5 L137,286 Q140.5,287 140.5,291 L141.8,304 Q141.5,307.5 137.5,308 L133,308.6 Q130,308.5 129.8,305 Z" fill="#fff" stroke="#3c3c3c" stroke-width="0.9" stroke-linejoin="round"/>
<path d="M127.8,289.5 L130.2,285 L135.2,284.6 L137.8,289 L135.6,293.8 L130.5,294.4Z" fill="#fff" stroke="#3c3c3c" stroke-width="0.9" stroke-linejoin="round"/>
<circle cx="133" cy="289.4" r="2.3" fill="none" stroke="#555" stroke-width="0.6"/>
<circle cx="137.6" cy="302.4" r="2.3" fill="none" stroke="#3c3c3c" stroke-width="0.8"/>
<path d="M253.8,232.5 L263.5,233.8 Q268.4,238 268.4,241.5 L267.7,245.6 Q265,249.8 260.8,249.8 L257,246 Z" fill="#fff" stroke="#3c3c3c" stroke-width="0.9" stroke-linejoin="round"/>
<path d="M254.5,231.5 L256.5,228.2 L260.5,228.2 L262.5,231.5 L260.5,234.8 L256.5,234.8Z" fill="#fff" stroke="#3c3c3c" stroke-width="0.9" stroke-linejoin="round"/>
<circle cx="258.5" cy="231.5" r="1.8" fill="none" stroke="#555" stroke-width="0.6"/>
<circle cx="264.5" cy="243" r="1.9" fill="none" stroke="#3c3c3c" stroke-width="0.8"/>
<path d="M222.5,290 L251.5,274.5 Q255,274 256.5,278 L257,280 L228,296.5 Q224,297 222.5,293Z" fill="#fff" stroke="#3c3c3c" stroke-width="0.9" stroke-linejoin="round"/>
<path d="M224.5,293 L230.5,290 L231.5,299 L226,301 Z" fill="#fff" stroke="#3c3c3c" stroke-width="0.9" stroke-linejoin="round"/>
<path d="M230,290.5 L251,279.5" stroke="#666" stroke-width="1.8" stroke-linecap="round"/>
<path d="M230,290.5 L251,279.5" stroke="#ccc" stroke-width="0.6" stroke-linecap="round"/>
<ellipse cx="258" cy="277.8" rx="4" ry="3.4" fill="#fff" stroke="#3c3c3c" stroke-width="0.9"/>
<path d="M234.6,338 L245.3,334.4 L258,355.3 Q258.5,359 254,361 L251,361.6 Q249,361.5 247.5,359 Z" fill="#fff" stroke="#3c3c3c" stroke-width="0.9" stroke-linejoin="round"/>
<path d="M248,342 L253.5,356" stroke="#555" stroke-width="3" stroke-linecap="round"/>
<path d="M248,342 L253.5,356" stroke="#fff" stroke-width="1.6" stroke-linecap="round"/>
<path d="M233.5,334.5 Q233.5,329 239,329 Q244.5,329 244.5,334.5 Q244.5,340 239,340 Q233.5,340 233.5,334.5Z" fill="#fff" stroke="#3c3c3c" stroke-width="0.9" stroke-linejoin="round"/>
<circle cx="239.5" cy="334.5" r="2.2" fill="none" stroke="#555" stroke-width="0.7"/>
<path d="M160,400 Q162,398.5 165,399 L187,402 Q191.5,403 191,408 Q190.5,412.5 186,412.5 L162,411 Q158.5,410.5 158.5,406 Z" fill="#fff" stroke="#3c3c3c" stroke-width="0.9" stroke-linejoin="round"/>
<circle cx="186" cy="407.3" r="3" fill="none" stroke="#3c3c3c" stroke-width="0.8"/>
<path d="M162,400.5 L160.5,410" stroke="#3c3c3c" stroke-width="1.4"/>
<path d="M182,424 L195,420.5 Q199.8,421 199.5,426 L199,431 Q197,435.2 192,435 L181,433 Z" fill="#fff" stroke="#3c3c3c" stroke-width="0.9" stroke-linejoin="round"/>
<circle cx="192.7" cy="429" r="2" fill="none" stroke="#3c3c3c" stroke-width="0.8"/>
<rect x="36" y="310" width="6" height="7" fill="#ffff00"/>
<text x="39.0" y="315.7" font-size="6" font-family="Liberation Sans" text-anchor="middle" fill="#222">1</text>
<path d="M41.5,318.3 L51.9,332.8" stroke="#555" stroke-width="0.6"/>
<rect x="75" y="287.5" width="6" height="7" fill="#ffff00"/>
<text x="78.0" y="293.2" font-size="6" font-family="Liberation Sans" text-anchor="middle" fill="#222">2</text>
<path d="M81,295 L89,306" stroke="#555" stroke-width="0.6"/>
<rect x="151" y="243" width="6" height="7" fill="#f07878"/>
<text x="154.0" y="248.7" font-size="6" font-family="Liberation Sans" text-anchor="middle" fill="#222">3</text>
<path d="M157,251 L163,261" stroke="#555" stroke-width="0.6"/>
<rect x="204.5" y="212.5" width="6" height="7" fill="#ffff00"/>
<text x="207.5" y="218.2" font-size="6" font-family="Liberation Sans" text-anchor="middle" fill="#222">4</text>
<path d="M210,220 L216.3,230" stroke="#555" stroke-width="0.6"/>
<rect x="254.5" y="184.5" width="6" height="7" fill="#ffff00"/>
<text x="257.5" y="190.2" font-size="6" font-family="Liberation Sans" text-anchor="middle" fill="#222">5</text>
<path d="M258.5,192 L264.6,203.6" stroke="#555" stroke-width="0.6"/>
<rect x="288" y="165" width="6" height="7" fill="#ffff00"/>
<text x="291.0" y="170.7" font-size="6" font-family="Liberation Sans" text-anchor="middle" fill="#222">6</text>
<path d="M292.3,172.5 L300.6,187" stroke="#555" stroke-width="0.6"/>
<rect x="141.5" y="315" width="6" height="7" fill="#ffff00"/>
<text x="144.5" y="320.7" font-size="6" font-family="Liberation Sans" text-anchor="middle" fill="#222">7</text>
<path d="M136.3,302.7 L142.4,314.8" stroke="#555" stroke-width="0.6"/>
<rect x="143" y="384.5" width="6" height="7" fill="#ffff00"/>
<text x="146.0" y="390.2" font-size="6" font-family="Liberation Sans" text-anchor="middle" fill="#222">8</text>
<path d="M148.6,391.4 L160,400.9" stroke="#555" stroke-width="0.6"/>
<rect x="263.5" y="361.5" width="6" height="7" fill="#ffff00"/>
<text x="266.5" y="367.2" font-size="6" font-family="Liberation Sans" text-anchor="middle" fill="#222">9</text>
<path d="M257,356.6 L264,362.7" stroke="#555" stroke-width="0.6"/>
<rect x="262" y="499" width="9" height="7" fill="#ffff00"/>
<text x="266.5" y="504.7" font-size="6" font-family="Liberation Sans" text-anchor="middle" fill="#222">10</text>
<path d="M266.4,506 L266.4,514.2" stroke="#555" stroke-width="0.6"/>
<rect x="231" y="515" width="79" height="39" fill="#e8e8e8"/>
<rect x="230.5" y="514.5" width="79" height="39" fill="#fff" stroke="#a4a4a4" stroke-width="1"/>
<text x="235.7" y="523.3" font-size="6.1" font-family="Liberation Sans" fill="#4a4a4a" textLength="70.3" lengthAdjust="spacingAndGlyphs">ANTI CONTAMINATION KIT</text>
<text x="241.2" y="529.3" font-size="6.1" font-family="Liberation Sans" fill="#4a4a4a" textLength="55.1" lengthAdjust="spacingAndGlyphs">KIT DE PROTECTION</text>
<text x="249" y="536" font-size="6.1" font-family="Liberation Sans" fill="#4a4a4a" textLength="36.4" lengthAdjust="spacingAndGlyphs">SCHUTZSATZ</text>
<text x="246.6" y="544.5" font-size="6.1" font-family="Liberation Sans" fill="#4a4a4a" textLength="45.4" lengthAdjust="spacingAndGlyphs">KIT PROTEZIONE</text>
<text x="233.9" y="551.7" font-size="6.1" font-family="Liberation Sans" fill="#4a4a4a" textLength="68.4" lengthAdjust="spacingAndGlyphs">EQUIPO DE PROTECCION</text>
</svg>
<!-- /DRAWING -->

<!-- TABLE -->
<div id="hdr" class="a"></div>
<svg class="a" style="left:352px;top:24px" width="24" height="20" viewBox="0 0 24 20"><use href="#hicon"/></svg>
<!-- TABLE_CONTENT -->
<div class="a" style="left:400px;top:24px;width:1px;height:20px;background:#fff"></div>
<div class="a" style="left:465px;top:24px;width:1px;height:20px;background:#fff"></div>
<div class="a" style="left:500px;top:24px;width:1px;height:20px;background:#fff"></div>
<div class="a" style="left:584px;top:24px;width:1px;height:20px;background:#fff"></div>
<div class="a" style="left:619px;top:24px;width:1px;height:20px;background:#fff"></div>
<div class="a" style="left:703px;top:24px;width:1px;height:20px;background:#fff"></div>
<div class="a" style="left:826px;top:24px;width:1px;height:20px;background:#fff"></div>
<div class="a" style="left:878px;top:24px;width:1px;height:20px;background:#fff"></div>
<div class="a" style="left:920px;top:24px;width:1px;height:20px;background:#fff"></div>
<div class="ht" style="left:405px;top:27px;transform:scaleX(1.02);transform-origin:0 0">Symbol(s)</div>
<div class="ht" style="left:470px;top:27px;transform:scaleX(1.17);transform-origin:0 0">Item</div>
<div class="ht" style="left:505px;top:27px;transform:scaleX(1.0);transform-origin:0 0">Parts No.</div>
<div class="ht" style="left:589px;top:27px;transform:scaleX(1.28);transform-origin:0 0">Qty.</div>
<div class="ht" style="left:624px;top:27px;transform:scaleX(1.07);transform-origin:0 0">Latest Part No.</div>
<div class="ht" style="left:708px;top:27px;transform:scaleX(1.12);transform-origin:0 0">Description</div>
<div class="ht" style="left:831px;top:27px;transform:scaleX(1.13);transform-origin:0 0">Cut Out</div>
<div class="ht" style="left:883px;top:27px;transform:scaleX(1.14);transform-origin:0 0">Cut In</div>
<div class="ht" style="left:925px;top:27px;transform:scaleX(1.06);transform-origin:0 0">Comment</div>
<div class="vs" style="left:400px;top:44px;height:199px"></div>
<div class="vs" style="left:465px;top:44px;height:199px"></div>
<div class="vs" style="left:500px;top:44px;height:199px"></div>
<div class="vs" style="left:584px;top:44px;height:199px"></div>
<div class="vs" style="left:619px;top:44px;height:199px"></div>
<div class="vs" style="left:703px;top:44px;height:199px"></div>
<div class="vs" style="left:826px;top:44px;height:199px"></div>
<div class="vs" style="left:878px;top:44px;height:199px"></div>
<div class="vs" style="left:920px;top:44px;height:199px"></div>
<div class="hl" style="top:63px"></div>
<div class="hl" style="top:83px"></div>
<div class="hl" style="top:103px"></div>
<div class="hl" style="top:123px"></div>
<div class="hl" style="top:143px"></div>
<div class="hl" style="top:163px"></div>
<div class="hl" style="top:183px"></div>
<div class="hl" style="top:203px"></div>
<div class="hl" style="top:223px"></div>
<div class="hl" style="top:243px"></div>
<div class="sel" style="top:84px"></div>
<div class="a" style="left:400px;top:84px;width:1px;height:19px;background:#d8e9fc"></div>
<div class="a" style="left:465px;top:84px;width:1px;height:19px;background:#d8e9fc"></div>
<div class="a" style="left:500px;top:84px;width:1px;height:19px;background:#d8e9fc"></div>
<div class="a" style="left:584px;top:84px;width:1px;height:19px;background:#d8e9fc"></div>
<div class="a" style="left:619px;top:84px;width:1px;height:19px;background:#d8e9fc"></div>
<div class="a" style="left:703px;top:84px;width:1px;height:19px;background:#d8e9fc"></div>
<div class="a" style="left:826px;top:84px;width:1px;height:19px;background:#d8e9fc"></div>
<div class="a" style="left:878px;top:84px;width:1px;height:19px;background:#d8e9fc"></div>
<div class="a" style="left:920px;top:84px;width:1px;height:19px;background:#d8e9fc"></div>
<div class="c" style="left:468px;top:46px;width:31.0px;color:#000;transform:scaleX(1.0);transform-origin:0 0">1</div>
<div class="c" style="left:504px;top:46px;width:85.1px;color:#000;transform:scaleX(0.94);transform-origin:0 0">T410474</div>
<div class="c" style="left:587px;top:46px;width:31.0px;color:#000;transform:scaleX(1.0);transform-origin:0 0">1</div>
<div class="c" style="left:623px;top:46px;width:85.1px;color:#000;transform:scaleX(0.94);transform-origin:0 0">T410474</div>
<div class="c" style="left:707px;top:46px;width:128.6px;color:#000;transform:scaleX(0.925);transform-origin:0 0">PIPE - FUEL INJ NO 1 CY</div>
<svg class="a" style="left:344px;top:45px" width="52" height="18" viewBox="0 0 52 18"><use href="#ic"/></svg>
<div class="c" style="left:468px;top:66px;width:31.0px;color:#000;transform:scaleX(1.0);transform-origin:0 0">2</div>
<div class="c" style="left:504px;top:66px;width:85.1px;color:#000;transform:scaleX(0.94);transform-origin:0 0">T410472</div>
<div class="c" style="left:587px;top:66px;width:31.0px;color:#000;transform:scaleX(1.0);transform-origin:0 0">1</div>
<div class="c" style="left:623px;top:66px;width:85.1px;color:#000;transform:scaleX(0.94);transform-origin:0 0">T410472</div>
<div class="c" style="left:707px;top:66px;width:128.6px;color:#000;transform:scaleX(0.925);transform-origin:0 0">PIPE - FUEL INJ NO 2 CY</div>
<svg class="a" style="left:344px;top:65px" width="52" height="18" viewBox="0 0 52 18"><use href="#ic"/></svg>
<div class="c" style="left:468px;top:86px;width:31.0px;color:#fff;transform:scaleX(1.0);transform-origin:0 0">3</div>
<div class="c" style="left:504px;top:86px;width:85.1px;color:#fff;transform:scaleX(0.94);transform-origin:0 0">T410470</div>
<div class="c" style="left:587px;top:86px;width:31.0px;color:#fff;transform:scaleX(1.0);transform-origin:0 0">1</div>
<div class="c" style="left:623px;top:86px;width:85.1px;color:#fff;transform:scaleX(0.94);transform-origin:0 0">T410470</div>
<div class="c" style="left:707px;top:86px;width:128.6px;color:#fff;transform:scaleX(0.925);transform-origin:0 0">PIPE - FUEL INJ NO 3 CY</div>
<svg class="a" style="left:344px;top:85px" width="52" height="18" viewBox="0 0 52 18"><use href="#ics"/></svg>
<div class="c" style="left:468px;top:106px;width:31.0px;color:#000;transform:scaleX(1.0);transform-origin:0 0">4</div>
<div class="c" style="left:504px;top:106px;width:85.1px;color:#000;transform:scaleX(0.94);transform-origin:0 0">T410471</div>
<div class="c" style="left:587px;top:106px;width:31.0px;color:#000;transform:scaleX(1.0);transform-origin:0 0">1</div>
<div class="c" style="left:623px;top:106px;width:85.1px;color:#000;transform:scaleX(0.94);transform-origin:0 0">T410471</div>
<div class="c" style="left:707px;top:106px;width:128.6px;color:#000;transform:scaleX(0.925);transform-origin:0 0">PIPE - FUEL INJ NO 4 CY</div>
<svg class="a" style="left:344px;top:105px" width="52" height="18" viewBox="0 0 52 18"><use href="#ic"/></svg>
<div class="c" style="left:468px;top:126px;width:31.0px;color:#000;transform:scaleX(1.0);transform-origin:0 0">5</div>
<div class="c" style="left:504px;top:126px;width:85.1px;color:#000;transform:scaleX(0.94);transform-origin:0 0">T410473</div>
<div class="c" style="left:587px;top:126px;width:31.0px;color:#000;transform:scaleX(1.0);transform-origin:0 0">1</div>
<div class="c" style="left:623px;top:126px;width:85.1px;color:#000;transform:scaleX(0.94);transform-origin:0 0">T410473</div>
<div class="c" style="left:707px;top:126px;width:128.6px;color:#000;transform:scaleX(0.925);transform-origin:0 0">PIPE - FUEL INJ NO 5 CY</div>
<svg class="a" style="left:344px;top:125px" width="52" height="18" viewBox="0 0 52 18"><use href="#ic"/></svg>
<div class="c" style="left:468px;top:146px;width:31.0px;color:#000;transform:scaleX(1.0);transform-origin:0 0">6</div>
<div class="c" style="left:504px;top:146px;width:85.1px;color:#000;transform:scaleX(0.94);transform-origin:0 0">T410480</div>
<div class="c" style="left:587px;top:146px;width:31.0px;color:#000;transform:scaleX(1.0);transform-origin:0 0">1</div>
<div class="c" style="left:623px;top:146px;width:85.1px;color:#000;transform:scaleX(0.94);transform-origin:0 0">T410480</div>
<div class="c" style="left:707px;top:146px;width:128.6px;color:#000;transform:scaleX(0.925);transform-origin:0 0">PIPE - FUEL INJ NO 6 CY</div>
<svg class="a" style="left:344px;top:145px" width="52" height="18" viewBox="0 0 52 18"><use href="#ic"/></svg>
<div class="c" style="left:468px;top:166px;width:31.0px;color:#000;transform:scaleX(1.0);transform-origin:0 0">7</div>
<div class="c" style="left:504px;top:166px;width:85.1px;color:#000;transform:scaleX(0.94);transform-origin:0 0">2646E006</div>
<div class="c" style="left:587px;top:166px;width:31.0px;color:#000;transform:scaleX(1.0);transform-origin:0 0">3</div>
<div class="c" style="left:623px;top:166px;width:85.1px;color:#000;transform:scaleX(0.94);transform-origin:0 0">2646E006</div>
<div class="c" style="left:707px;top:166px;width:133.7px;color:#000;transform:scaleX(0.89);transform-origin:0 0">CLIP</div>
<svg class="a" style="left:344px;top:165px" width="52" height="18" viewBox="0 0 52 18"><use href="#ic"/></svg>
<div class="c" style="left:468px;top:186px;width:31.0px;color:#000;transform:scaleX(1.0);transform-origin:0 0">8</div>
<div class="c" style="left:504px;top:186px;width:85.1px;color:#000;transform:scaleX(0.94);transform-origin:0 0">2646E008</div>
<div class="c" style="left:587px;top:186px;width:31.0px;color:#000;transform:scaleX(1.0);transform-origin:0 0">1</div>
<div class="c" style="left:623px;top:186px;width:85.1px;color:#000;transform:scaleX(0.94);transform-origin:0 0">2646E008</div>
<div class="c" style="left:707px;top:186px;width:133.7px;color:#000;transform:scaleX(0.89);transform-origin:0 0">CLIP</div>
<svg class="a" style="left:344px;top:185px" width="52" height="18" viewBox="0 0 52 18"><use href="#ic"/></svg>
<div class="c" style="left:468px;top:206px;width:31.0px;color:#000;transform:scaleX(1.0);transform-origin:0 0">9</div>
<div class="c" style="left:504px;top:206px;width:85.1px;color:#000;transform:scaleX(0.94);transform-origin:0 0">2646E010</div>
<div class="c" style="left:587px;top:206px;width:31.0px;color:#000;transform:scaleX(1.0);transform-origin:0 0">2</div>
<div class="c" style="left:623px;top:206px;width:85.1px;color:#000;transform:scaleX(0.94);transform-origin:0 0">2646E010</div>
<div class="c" style="left:707px;top:206px;width:133.7px;color:#000;transform:scaleX(0.89);transform-origin:0 0">CLIP</div>
<svg class="a" style="left:344px;top:205px" width="52" height="18" viewBox="0 0 52 18"><use href="#ic"/></svg>
<div class="c" style="left:468px;top:226px;width:31.0px;color:#000;transform:scaleX(1.0);transform-origin:0 0">10</div>
<div class="c" style="left:504px;top:226px;width:85.1px;color:#000;transform:scaleX(0.94);transform-origin:0 0">T400106</div>
<div class="c" style="left:587px;top:226px;width:31.0px;color:#000;transform:scaleX(1.0);transform-origin:0 0">1</div>
<div class="c" style="left:623px;top:226px;width:85.1px;color:#000;transform:scaleX(0.94);transform-origin:0 0">T400106</div>
<div class="c" style="left:707px;top:226px;width:133.7px;color:#000;transform:scaleX(0.89);transform-origin:0 0">PROTECTION KIT</div>
<svg class="a" style="left:344px;top:225px" width="52" height="18" viewBox="0 0 52 18"><use href="#ic"/></svg>
<!-- /TABLE_CONTENT -->

<svg class="a" style="left:1024px;top:526px" width="46" height="52" viewBox="1024 526 46 52">
<g fill="none" stroke="#1a56a0" stroke-width="2.7">
<circle cx="1037.6" cy="537.3" r="6.1"/><circle cx="1056.2" cy="537.3" r="6.1"/>
<circle cx="1037.6" cy="555.6" r="6.1"/><circle cx="1056.2" cy="555.6" r="6.1"/>
</g>
<g stroke="#1a56a0" stroke-width="2.4">
<path d="M1033.5,541.4 L1041.7,533.2"/><path d="M1052.1,533.2 L1060.3,541.4"/>
<path d="M1033.5,551.5 L1041.7,559.7"/><path d="M1052.1,559.7 L1060.3,551.5"/>
</g>
<g fill="#1a56a0">
<path d="M1046.9,529.6 L1048.4,532.5 L1048.2,539 L1046.9,542.5 L1045.6,539 L1045.4,532.5Z"/>
<path d="M1046.9,563.3 L1048.4,560.4 L1048.2,554 L1046.9,550.5 L1045.6,554 L1045.4,560.4Z"/>
<path d="M1030.2,546.4 L1033,545 L1039.5,545.2 L1043,546.4 L1039.5,547.6 L1033,547.8Z"/>
<path d="M1063.6,546.4 L1060.8,545 L1054.3,545.2 L1050.8,546.4 L1054.3,547.6 L1060.8,547.8Z"/>
</g>
<text x="1029" y="575.6" font-family="Liberation Sans" font-weight="bold" font-size="12" fill="#1a56a0" stroke="#1a56a0" stroke-width="0.35" textLength="37" lengthAdjust="spacingAndGlyphs">Perkins</text>
<circle cx="1067.6" cy="569.5" r="0.8" fill="#8aa8cc"/>
</svg>
</body></html>
